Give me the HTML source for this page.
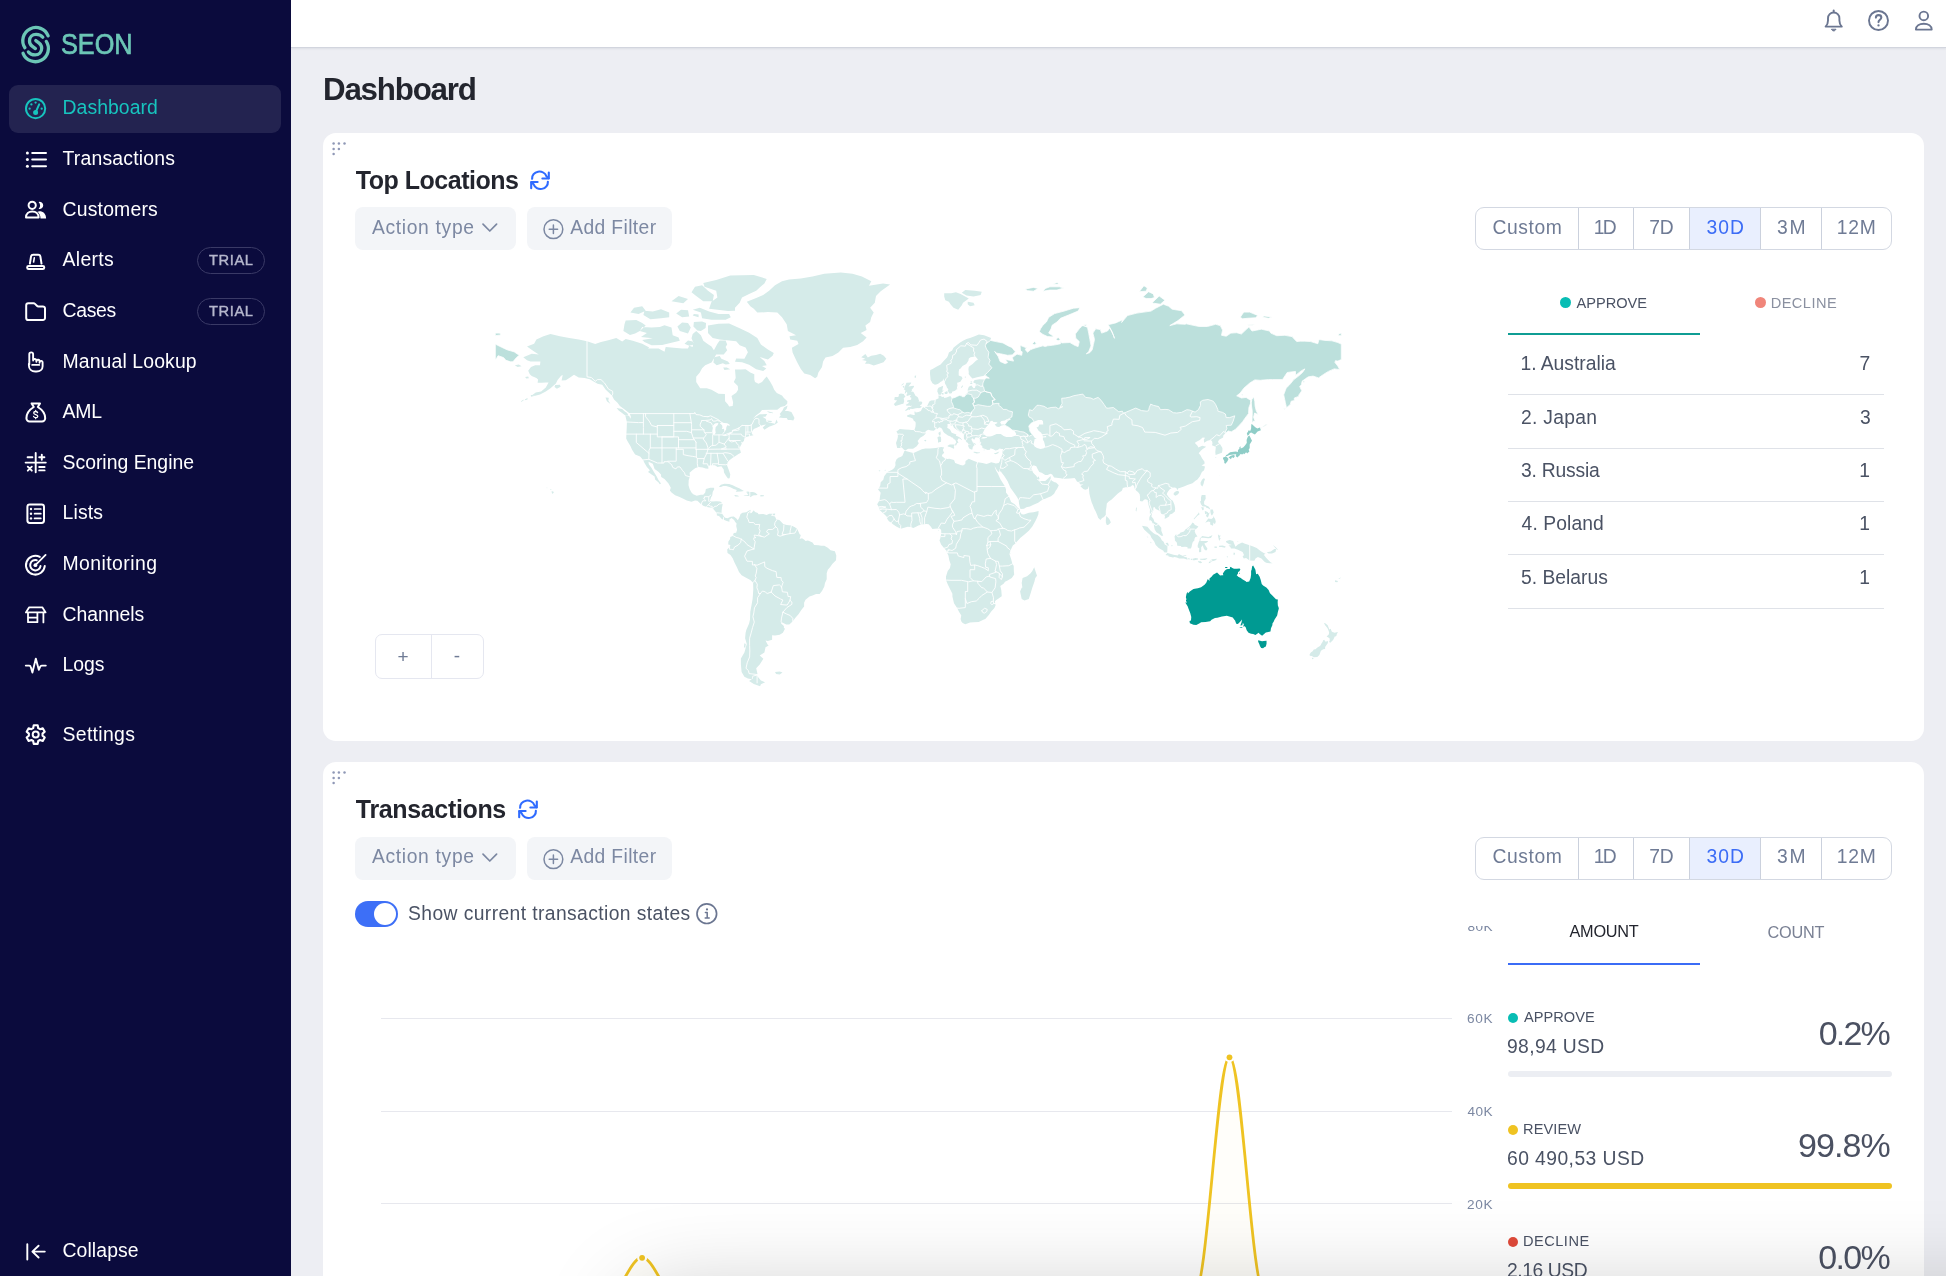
<!DOCTYPE html>
<html lang="en">
<head>
<meta charset="utf-8">
<title>SEON Dashboard</title>
<style>
*{box-sizing:border-box;margin:0;padding:0}
html,body{width:1946px;height:1276px;overflow:hidden;background:#edeef3}
body{font-family:"Liberation Sans",sans-serif;position:relative;color:#4a5264}
.abs{position:absolute}
.t{position:absolute;white-space:nowrap;line-height:1}
/* sidebar */
#side{position:absolute;left:0;top:0;width:291px;height:1276px;background:#0b0b3d}
#side .act{position:absolute;left:9px;top:85px;width:272px;height:48px;border-radius:9px;background:#232350}
.nav{position:absolute;left:62.5px;font-size:19.4px;letter-spacing:.35px;color:#fff;white-space:nowrap;line-height:24px}
.ico{position:absolute;left:24px;width:24px;height:24px;overflow:visible}
.trial{position:absolute;left:197px;width:68px;height:27px;border:1px solid #3a3a66;border-radius:14px;color:#b6b8cd;font-size:14.7px;-webkit-text-stroke:.4px #b6b8cd;letter-spacing:.6px;line-height:25px;padding-left:.6px;text-align:center}
/* header */
#hdr{position:absolute;left:291px;top:0;width:1655px;height:48px;background:#fff;border-bottom:1px solid #d2d5de;box-shadow:0 1px 2px rgba(20,30,60,.07)}
/* cards */
.card{position:absolute;left:323px;width:1601px;background:#fff;border-radius:13px}
.pill{position:absolute;height:43px;border-radius:8px;background:#f3f5f8}
.pill .t{color:#7c88a2;font-size:19.3px;letter-spacing:.4px}
.rng{position:absolute;left:1475px;width:417px;height:43px;border:1px solid #d3d8e2;border-radius:9px;overflow:hidden;background:#fff}
.rng i{position:absolute;top:0;width:1px;height:43px;background:#cbd1dd}
.rng .sel{position:absolute;top:0;left:214px;width:70px;height:41px;background:#e9effe}
.rng .t{color:#6f7b95;font-size:19.3px;letter-spacing:.3px;top:11px}
.row{position:absolute;left:1508px;width:376px;height:1px;background:#dfe2e8}
.li{color:#4a5264;font-size:19.3px;letter-spacing:.3px}
.num{position:absolute;width:60px;text-align:right;color:#4a5264;font-size:19.3px;line-height:1;left:1810px}
.lbl{color:#4a5264;font-size:14.6px;letter-spacing:.9px}
.pct{position:absolute;width:200px;left:1691px;text-align:right;font-size:32.5px;line-height:1;color:#4a5264;letter-spacing:.4px}
.bar{position:absolute;left:1508px;width:384px;height:6px;border-radius:3px;background:#eceef3}
.grid{position:absolute;left:381px;width:1071px;height:1px;background:#e7e8ee}
.ax{color:#7c88a2;font-size:13.6px;letter-spacing:.2px}
</style>
</head>
<body>
<div id="root" style="position:absolute;left:0;top:0;width:1946px;height:1276px;overflow:hidden;will-change:transform">
<!-- ================= HEADER ================= -->
<div id="hdr"></div>
<svg class="abs" style="left:1800px;top:0" width="146" height="48" viewBox="1800 0 146 48" fill="none" stroke="#6b7691" stroke-width="1.9" stroke-linecap="round" stroke-linejoin="round">
<path d="M1825.6,26.6c1.6,-1.6 2.4,-3.4 2.4,-6.2v-2.2a5.7,5.7 0 0 1 11.4,0v2.2c0,2.8 .8,4.6 2.4,6.2z"/><path d="M1833.7,10.4v1.6"/><path d="M1831.6,29.6c.5,.9 1.2,1.3 2.1,1.3s1.6,-.4 2.1,-1.3z" fill="#6b7691" stroke-width="1"/>
<circle cx="1878.5" cy="20.5" r="9.5"/><path d="M1875.9,17.6c0,-1.5 1.1,-2.5 2.7,-2.5s2.7,1 2.7,2.4c0,2.3 -2.8,2.2 -2.8,4.6" stroke-width="2.1"/><circle cx="1878.5" cy="25.4" r="1.15" fill="#6b7691" stroke="none"/>
<circle cx="1923.8" cy="15.9" r="4.3"/><path d="M1915.9,29.6c0,-3.6 3.4,-5.9 7.9,-5.9s7.9,2.3 7.9,5.9z"/>
</svg>

<!-- ================= SIDEBAR ================= -->
<div id="side">
  <div class="act"></div>
  <svg class="abs" style="left:0;top:0" width="291" height="80" viewBox="0 0 291 80" fill="none" stroke="#6cc6b6" stroke-width="3.3" stroke-linecap="round" stroke-linejoin="round">
<path d="M24.91,47.73A13.1,13.1 0 1 1 48.13,35.91"/><path d="M46.29,41.47A13.1,13.1 0 1 1 23.07,53.29"/><path d="M42.80,37.30C41.30,35.30 38.90,34.30 36.10,34.30C32.30,34.30 29.50,37.20 29.50,40.90C29.50,43.10 30.30,44.70 32.10,46.10L35.40,48.60"/><path d="M28.40,51.90C29.90,53.90 32.30,54.90 35.10,54.90C38.90,54.90 41.70,52.00 41.70,48.30C41.70,46.10 40.90,44.50 39.10,43.10L35.80,40.60"/>
</svg>
<div class="t" id="seon" style="left:60.7px;top:30.4px;font-size:28.8px;color:#6cc6b6;-webkit-text-stroke:.7px #6cc6b6;transform:scaleX(.877);transform-origin:0 0;letter-spacing:0">SEON</div>
  <div class="nav" style="top:95px;color:#17c4be;letter-spacing:0.05px">Dashboard</div>
  <div class="nav" style="top:146px;letter-spacing:0.195px">Transactions</div>
  <div class="nav" style="top:197px;letter-spacing:0.19px">Customers</div>
  <div class="nav" style="top:247px;letter-spacing:0.33px">Alerts</div>
  <div class="nav" style="top:298px;letter-spacing:-0.3px">Cases</div>
  <div class="nav" style="top:349px;letter-spacing:0.125px">Manual Lookup</div>
  <div class="nav" style="top:399px;letter-spacing:-0.2px">AML</div>
  <div class="nav" style="top:450px;letter-spacing:0px">Scoring Engine</div>
  <div class="nav" style="top:500px;letter-spacing:0.15px">Lists</div>
  <div class="nav" style="top:551px;letter-spacing:0.44px">Monitoring</div>
  <div class="nav" style="top:602px;letter-spacing:-0.04px">Channels</div>
  <div class="nav" style="top:652px;letter-spacing:-0.05px">Logs</div>
  <div class="nav" style="top:722px;letter-spacing:0.33px">Settings</div>
  <div class="nav" style="top:1237.6px;letter-spacing:0.09px">Collapse</div>
  <div class="trial" style="top:247px">TRIAL</div>
  <div class="trial" style="top:298px">TRIAL</div>
  <svg class="abs" style="left:0;top:0" width="291" height="1276" viewBox="0 0 291 1276" fill="none" stroke="#fff" stroke-width="2" stroke-linecap="round" stroke-linejoin="round">
<g stroke="#17c4be"><circle cx="35.6" cy="108.6" r="9.6"/><path d="M35.7,112.2L39.2,104.4" stroke-width="2"/><circle cx="35.6" cy="112.6" r="1.5" fill="#17c4be"/><g fill="#17c4be" stroke="none"><circle cx="29.6" cy="108.7" r="1.15"/><circle cx="31.4" cy="104.4" r="1.15"/><circle cx="35.6" cy="102.6" r="1.15"/><circle cx="41.7" cy="108.7" r="1.15"/></g></g>
<path d="M32.2,153H46M32.2,159.6H46M32.2,166.2H46"/><g fill="#fff" stroke="none"><circle cx="27.4" cy="153" r="1.5"/><circle cx="27.4" cy="159.6" r="1.5"/><circle cx="27.4" cy="166.2" r="1.5"/></g>
<circle cx="32.2" cy="205.3" r="3.6"/><path d="M26,217.4c0,-3.6 2.8,-6 6.3,-6s6.3,2.4 6.3,6z"/><path d="M38.6,201.9a3.6,3.6 0 1 1 0,6.9a5.2,5.2 0 0 0 0,-6.9zM39.5,211.3c3.6,0 6.6,2.6 6.6,7.1h-5.6c0,-3 -1.2,-5.3 -3,-6.6c.6,-.3 1.3,-.5 2,-.5z" fill="#fff" stroke="none"/>
<rect x="27.2" y="265.9" width="17" height="3.2" rx="1.4"/><path d="M29.9,263.6L31,256.6c.2,-1.2 1,-1.9 2.1,-1.9h5.2c1.1,0 1.9,.7 2.1,1.9L41.5,263.6"/><path d="M34.3,257.8L33.6,262" stroke-width="1.6"/>
<path d="M26.2,305.4a2.1,2.1 0 0 1 2.1,-2.1h5.2c.6,0 1.1,.2 1.5,.6l1.9,1.9c.4,.4 .9,.6 1.5,.6h4.5a2.1,2.1 0 0 1 2.1,2.1v9.4a2.1,2.1 0 0 1 -2.1,2.1h-14.6a2.1,2.1 0 0 1 -2.1,-2.1z"/>
<path d="M29.3,364.5V354.3a1.9,1.9 0 0 1 3.8,0v6.3M33.1,360.2a1.7,1.7 0 0 1 3.3,.4v1.2M36.4,361.2a1.6,1.6 0 0 1 3.2,.4v1.2M39.6,362.2a1.5,1.5 0 0 1 3,.4v3.6c0,3.4 -2.6,5.3 -6,5.3h-1.4c-3.6,0 -6.3,-2.5 -6.3,-6.1v-1.6M32.2,364.9H39.2" stroke-width="1.9"/>
<path d="M31.6,403.4h8.4l-2.2,3.6c4.3,2.6 7.4,6.9 7.4,11.2a3.2,3.2 0 0 1 -3.2,3.2h-12.4a3.2,3.2 0 0 1 -3.2,-3.2c0,-4.3 3.1,-8.6 7.4,-11.2z"/><path d="M37.6,412.6c-.4,-.8 -1.2,-1.1 -2,-1.1c-1.1,0 -1.9,.6 -1.9,1.5c0,2.1 4.1,1 4.1,3.2c0,.9 -.9,1.5 -2,1.5c-1,0 -1.9,-.4 -2.2,-1.3M35.7,410.5v1M35.7,417.7v1" stroke-width="1.3"/>
<path d="M35.7,453V472.3M25.6,462.6H45.8M27.6,457.2H32.4M39.2,457.2H44.4M41.8,454.6V459.8M27.8,466.7L31.8,470.7M31.8,466.7L27.8,470.7M39.2,467H44.6M39.2,470.4H44.6" stroke-width="1.9"/>
<rect x="27.4" y="504.4" width="16.6" height="18.6" rx="2.4"/><path d="M34.6,509H40.8M34.6,513.7H40.8M34.6,518.4H40.8" stroke-width="1.7"/><g fill="#fff" stroke="none"><circle cx="31" cy="509" r="1.2"/><circle cx="31" cy="513.7" r="1.2"/><circle cx="31" cy="518.4" r="1.2"/></g>
<path d="M39.81,556.90A9.4,9.4 0 1 0 44.76,566.02"/><path d="M36.75,560.18A5.2,5.2 0 1 0 40.52,566.10"/><circle cx="35.4" cy="565.2" r="1.9" fill="#fff" stroke="none"/><path d="M35.4,565.2L45.6,554.9" stroke-width="1.8"/>
<path d="M29.2,607.3H42.3L45.6,612.4H25.9Z" stroke-width="1.8"/><path d="M28,613V622.2H37.4V613M28,617.6H37.4M43.4,613V622.4" stroke-width="1.8"/>
<path d="M25.8,665.6H29.2c.9,0 1.4,.5 1.6,1.3L32.4,672.6L35.8,658.6L38.8,669.8L40.2,666.6c.3,-.7 .8,-1 1.5,-1H45.8" stroke-width="1.9"/>
<path d="M38.24,728.18L37.68,725.31L33.72,725.31L33.16,728.18L31.41,729.19L28.64,728.24L26.66,731.66L28.87,733.59L28.87,735.61L26.66,737.54L28.64,740.96L31.41,740.01L33.16,741.02L33.72,743.89L37.68,743.89L38.24,741.02L39.99,740.01L42.76,740.96L44.74,737.54L42.53,735.61L42.53,733.59L44.74,731.66L42.76,728.24L39.99,729.19Z" stroke-width="2.1"/><circle cx="35.7" cy="734.6" r="3"/>
<path d="M27.3,1244.3V1259.5M44.8,1251.6H32.6M38.6,1245.7L32.4,1251.6L38.6,1257.5" stroke-width="1.9"/>
</svg>
</div>

<!-- ================= TITLE ================= -->

<!-- ================= CARD 1 ================= -->
<div class="card" style="top:133px;height:608px"></div>
<svg class="abs" style="left:0;top:0;overflow:visible" width="1" height="1" fill="#8f98b6"><circle cx="333.6" cy="143.6" r="1.25"/><circle cx="338.9" cy="143.6" r="1.25"/><circle cx="344.5" cy="143.6" r="1.25"/><circle cx="333.6" cy="148.9" r="1.25"/><circle cx="338.9" cy="148.9" r="1.25"/><circle cx="333.6" cy="154.1" r="1.25"/></svg>
<svg class="abs" style="left:528.8px;top:170.2px" width="22" height="20.4" viewBox="-12 -12 24 24" preserveAspectRatio="none" fill="none" stroke="#2f6bff" stroke-width="2.3" stroke-linecap="round" stroke-linejoin="round">
<path d="M-8.6,-1.6A8,8 0 0 1 7,-4.6L9.4,-2.2"/><path d="M9.6,-9.2V-2H2.6"/>
<path d="M8.6,1.8A8,8 0 0 1 -7,4.8L-9.4,2.4"/><path d="M-9.6,9.4V2.2H-2.6"/>
</svg>
<div class="pill" style="left:355px;top:207px;width:161px"><svg class="abs" style="left:126px;top:15px" width="18" height="12" viewBox="0 0 18 12" fill="none" stroke="#7c88a2" stroke-width="1.7" stroke-linecap="round" stroke-linejoin="round"><path d="M2,2.2L8.8,9L15.6,2.2"/></svg></div>
<div class="pill" style="left:527px;top:207px;width:145px"><svg class="abs" style="left:15px;top:10.5px" width="23" height="23" viewBox="0 0 23 23" fill="none" stroke="#7c88a2" stroke-width="1.5" stroke-linecap="round"><circle cx="11.4" cy="11.2" r="9.4"/><path d="M7.2,11.2H15.6M11.4,7V15.4"/></svg></div>
<div class="rng" style="top:207px">
  <div class="sel"></div>
  <i style="left:102px"></i><i style="left:157px"></i><i style="left:213px"></i><i style="left:284px"></i><i style="left:345px"></i>
</div>
<svg class="abs" style="left:0;top:0" width="1946" height="760" viewBox="0 0 1946 760">
<path fill="#d5ebe9" d="M523.3,357.3L531.7,353.8L538.8,354.5L534.1,351.4L527.0,346.6L534.1,343.7L536.4,339.5L543.5,336.2L550.5,334.0L559.9,336.2L569.3,337.9L578.7,339.5L587.0,341.2L595.2,344.1L601.0,342.1L609.3,340.0L616.3,337.9L622.2,341.6L625.7,339.1L632.8,340.8L642.2,343.7L649.2,347.4L648.0,348.6L658.6,348.6L664.5,351.8L665.7,347.0L673.9,347.8L682.1,348.6L688.0,348.6L689.2,345.8L692.7,347.0L693.4,342.5L691.5,338.3L692.7,334.0L696.2,331.0L700.9,335.3L703.3,340.8L707.3,343.7L711.5,346.6L713.9,350.2L717.4,343.7L719.7,340.4L725.6,340.4L727.2,344.5L725.6,347.0L727.2,350.2L723.7,354.5L716.2,354.5L713.9,358.4L711.5,362.6L705.2,365.2L702.1,368.2L699.8,372.5L696.2,376.8L696.2,382.0L700.2,388.2L706.8,388.2L711.5,389.8L718.5,393.8L724.9,394.1L725.1,401.2L728.0,404.4L729.1,406.6L732.7,406.0L733.1,402.2L731.5,396.1L736.2,392.8L738.1,389.8L737.8,386.1L733.8,382.0L735.7,377.9L735.0,369.6L740.9,369.6L745.6,369.3L750.3,372.5L754.3,374.3L754.3,379.6L755.0,382.0L758.5,383.7L762.0,382.0L764.8,378.6L766.7,376.4L770.2,381.7L772.6,386.1L774.2,389.8L776.8,393.1L782.0,395.4L783.9,398.0L787.4,401.2L787.2,403.8L784.8,406.0L780.8,406.9L777.3,409.7L770.2,409.7L762.0,410.0L759.7,412.7L756.2,415.2L752.6,419.1L755.0,417.3L759.7,414.3L767.2,414.0L765.5,416.7L762.5,416.7L766.0,419.1L766.5,421.7L769.1,422.6L772.6,423.2L775.0,423.8L776.4,419.6L777.8,422.6L775.0,424.6L769.1,426.7L764.4,429.8L762.7,427.5L766.0,424.6L763.2,424.9L760.9,425.8L757.3,427.5L753.8,429.0L752.2,431.3L751.7,433.3L752.6,434.7L753.8,434.9L752.4,435.5L750.5,435.8L747.9,436.4L744.9,437.5L744.4,438.6L743.9,441.1L742.3,442.5L740.9,441.4L741.8,443.8L740.4,446.3L739.7,447.9L738.8,443.5L738.3,447.4L739.7,448.4L740.2,450.1L740.9,452.7L738.5,454.1L735.5,455.9L732.7,457.8L729.1,460.4L727.5,462.5L727.0,465.3L728.9,470.2L730.3,474.5L729.6,478.3L728.0,478.5L726.1,476.0L724.0,472.5L723.7,469.4L721.4,466.3L719.7,466.6L717.6,467.1L715.0,465.3L711.5,465.3L708.2,465.8L708.4,468.7L705.6,468.4L702.6,467.4L698.6,466.9L695.5,467.9L692.7,469.9L689.6,472.7L689.9,476.5L688.7,480.3L688.5,485.2L689.6,488.9L691.5,492.6L693.2,494.3L696.7,495.8L700.9,494.8L703.3,494.8L705.2,492.6L705.9,488.9L710.3,487.7L713.9,487.7L714.3,488.9L712.7,491.9L712.2,495.5L711.0,497.5L709.9,501.1L712.7,501.6L716.2,501.3L720.2,501.6L722.8,503.5L722.1,507.1L721.6,510.7L721.6,513.0L723.7,515.9L725.1,517.8L727.5,518.3L730.8,516.8L733.8,516.6L736.4,518.5L735.2,522.1L734.1,519.9L731.5,518.0L729.4,519.5L729.4,521.8L726.8,521.1L723.7,519.7L721.8,519.0L719.0,515.9L716.9,515.4L716.7,513.0L713.1,508.8L712.2,507.8L708.0,507.3L703.7,506.1L701.4,504.4L697.4,500.8L695.0,500.6L691.5,501.8L686.8,500.4L683.3,498.7L679.1,496.7L675.1,495.3L671.5,492.6L669.9,490.4L670.8,487.7L668.5,483.5L664.5,479.0L661.2,477.0L661.0,474.5L658.4,471.7L654.6,468.9L652.8,463.8L648.5,461.7L648.8,464.3L651.6,468.1L653.9,472.0L656.7,476.5L658.6,480.3L661.0,483.5L659.8,484.2L658.6,482.5L655.1,479.5L654.6,476.5L651.6,474.5L649.2,472.7L648.0,472.0L649.9,470.2L646.9,466.9L644.5,463.0L643.1,459.9L640.1,456.4L635.1,454.6L632.1,449.8L630.4,446.0L627.4,441.1L626.2,438.6L626.4,434.1L626.7,428.4L626.9,422.0L625.3,415.5L629.2,416.1L630.4,418.8L630.9,416.7L629.7,413.6L628.8,412.7L625.0,409.7L619.9,406.0L617.5,402.8L614.0,399.6L612.1,395.8L609.3,393.1L605.8,389.8L602.2,384.8L597.5,383.7L594.5,382.0L589.8,379.3L584.6,377.9L578.7,377.5L574.0,374.7L569.3,377.9L565.8,380.3L561.6,380.6L562.7,375.0L565.8,373.6L561.1,375.7L557.6,379.9L555.9,383.4L550.5,388.2L545.8,391.5L540.0,394.5L535.2,395.8L531.0,396.1L535.7,392.5L541.1,391.5L545.8,387.5L548.6,382.4L545.8,382.4L541.6,382.7L537.6,382.7L538.1,379.6L536.4,377.9L531.7,376.1L529.8,374.3L528.2,370.7L531.0,367.1L535.2,365.2L540.0,365.2L540.4,361.5L536.4,361.5L530.5,361.5L527.0,360.3Z M773.8,353.0L767.9,349.4L760.9,344.5L757.3,337.9L749.1,332.7L739.7,328.3L729.1,323.4L718.5,323.8L708.0,325.6L708.0,333.1L712.7,337.9L719.7,339.5L729.1,340.4L736.2,341.2L739.7,345.3L745.6,347.4L747.9,352.2L744.4,358.8L736.2,358.4L735.0,361.8L742.0,362.2L749.1,364.8L756.2,369.3L763.2,371.1L766.3,368.5L762.0,366.0L766.7,365.2L764.4,361.1L759.7,356.9L767.9,359.6L772.6,355.7Z M644.5,342.1L651.6,345.3L662.1,344.9L670.4,342.9L679.8,340.8L678.6,337.4L672.7,335.3L671.5,327.4L664.5,325.2L659.8,327.0L651.6,327.4L642.2,327.0L639.8,331.0L646.9,333.1L641.0,337.0L652.8,338.3L642.2,340.0Z M630.0,334.9L623.4,331.0L624.5,324.3L625.7,320.6L636.3,320.1L642.2,322.9L645.7,325.6L639.8,331.0L635.1,333.6Z M643.4,315.0L650.4,319.2L661.0,318.3L669.2,317.3L669.2,312.6L661.0,309.2L652.8,311.6L644.5,310.7Z M730.8,317.3L725.6,319.7L711.5,319.7L702.1,318.3L700.9,312.6L692.7,309.7L699.8,307.7L709.1,311.6L718.5,314.0L729.1,314.0Z M735.0,310.7L728.0,311.1L709.1,308.7L711.5,301.7L717.4,297.6L716.2,290.7L704.5,286.8L703.3,282.9L716.2,280.1L730.3,275.5L753.8,274.9L766.7,278.9L764.4,283.5L759.7,287.4L756.2,290.7L749.1,293.9L742.0,297.6L739.7,302.7L735.0,307.7Z M712.7,301.2L703.3,301.2L696.2,296.0L691.5,292.3L695.0,286.8L702.1,285.2L708.0,290.7L713.9,294.9Z M697.4,330.5L693.4,326.5L693.9,322.0L702.1,321.5L706.1,322.9L705.6,327.9L700.9,331.0Z M688.0,333.6L679.8,331.0L677.4,326.5L682.1,322.5L688.0,322.9L690.8,327.4Z M684.5,343.7L688.0,340.4L692.7,341.6L693.9,344.5L689.2,345.8Z M714.3,357.3L713.4,362.6L716.7,365.2L722.8,363.3L725.6,364.5L729.8,364.1L728.0,361.5L721.4,358.8L719.7,356.1Z M689.2,316.4L682.1,317.3L676.2,313.6L681.0,309.7L688.0,310.2Z M630.4,312.6L638.6,314.0L645.7,310.7L642.2,306.2L634.0,307.7Z M671.5,301.2L683.3,303.2L688.0,299.1L678.6,296.0Z M692.7,315.5L698.6,317.3L698.6,314.5L693.9,314.0Z M723.2,367.4L726.8,367.4L730.3,369.3L724.4,370.0Z M778.9,417.6L780.8,415.2L779.7,414.0L782.5,410.6L783.9,407.5L787.6,405.6L786.7,408.8L784.8,410.9L787.9,410.9L791.4,412.1L793.0,414.9L794.5,417.9L793.3,420.5L790.9,419.9L787.9,419.9L786.7,417.9L783.2,417.9Z M766.7,410.9L772.6,412.4L773.3,413.3L769.1,412.7Z M767.2,420.5L772.1,421.1L771.2,422.3L767.9,421.7Z M616.6,408.1L622.2,409.1L624.5,411.2L627.1,413.0L628.5,415.5L625.0,415.2L622.7,413.6L618.7,410.6Z M605.5,397.4L608.8,397.7L608.3,400.6L610.5,404.1L606.9,401.2Z M555.2,385.1L559.9,384.8L560.6,386.8L556.9,388.8L554.5,387.1Z M530.8,395.1L534.3,395.1L534.1,396.1L531.0,396.7Z M525.1,399.3L527.5,398.0L527.5,399.6L524.7,400.3Z M521.1,401.2L523.5,399.6L523.5,400.6L521.1,401.9Z M514.8,365.2L518.8,364.5L521.6,366.3L517.6,367.1Z M525.1,377.1L528.2,376.4L528.9,378.2L526.3,378.6Z M815.1,378.2L810.2,375.0L804.3,373.6L800.8,368.9L797.3,362.6L794.9,357.6L792.6,352.6L791.9,347.8L798.5,344.1L797.3,340.8L790.2,339.5L789.5,336.2L796.1,335.3L787.9,331.0L786.7,324.3L782.0,317.3L777.3,312.6L767.9,312.1L757.3,312.6L753.8,308.7L750.3,306.2L746.8,301.7L756.2,298.1L763.2,294.9L769.1,290.7L775.0,285.2L782.0,281.2L789.0,279.5L800.8,278.4L812.5,276.6L824.3,273.7L840.8,272.5L852.5,273.7L861.9,276.6L871.3,281.2L869.0,285.7L883.0,283.5L890.1,284.6L880.7,291.2L876.0,296.0L874.8,302.7L870.1,307.7L873.7,312.6L871.3,317.3L870.1,322.0L865.4,325.6L866.6,330.1L860.7,333.1L866.6,337.4L863.1,341.2L857.2,344.9L850.2,347.0L843.1,347.8L838.4,352.6L832.5,356.1L825.5,357.6L823.1,361.5L822.0,367.1L818.4,372.5L817.2,376.8Z M861.2,357.3L865.4,354.1L867.8,357.6L871.3,355.7L876.0,354.9L880.2,353.8L883.8,355.7L886.3,358.8L883.5,362.2L878.4,364.1L873.7,365.6L869.0,363.7L865.0,363.7L866.6,361.1L861.9,359.9L865.4,358.8Z M736.4,518.5L737.8,520.2L739.2,517.8L740.6,514.0L742.5,512.8L746.3,512.3L748.6,510.7L750.7,509.7L750.7,511.9L749.6,513.3L751.5,513.0L753.8,510.2L755.0,511.9L757.8,513.0L758.5,514.2L763.2,514.0L766.7,514.9L769.1,513.8L772.6,513.8L771.0,515.4L775.0,516.6L776.1,519.0L779.7,520.2L783.2,523.9L786.7,525.1L791.4,525.4L794.9,527.2L797.3,528.9L799.6,534.3L800.8,535.0L799.6,539.0L802.0,538.3L804.3,539.7L805.5,540.9L807.9,540.6L812.5,542.5L814.2,545.1L818.4,545.3L821.2,545.8L824.3,545.8L827.8,547.7L830.6,550.3L834.9,551.2L836.3,555.5L836.0,560.2L832.5,563.8L830.2,566.9L827.8,569.7L826.7,573.3L826.7,579.3L825.0,583.0L824.3,586.6L822.0,591.0L819.6,594.0L816.1,594.0L812.5,595.5L809.5,596.5L805.5,599.7L804.1,602.7L804.1,606.5L801.3,610.1L798.5,614.2L795.6,617.4L792.6,621.6L789.3,624.5L786.2,624.5L781.3,622.1L781.1,623.4L783.9,626.1L783.9,628.2L785.1,628.5L782.9,632.8L779.7,634.7L775.0,635.5L772.1,635.3L772.1,639.7L767.9,641.1L765.5,640.5L767.9,645.0L768.8,645.6L765.5,647.3L764.4,652.5L759.7,655.4L763.4,658.7L759.7,664.4L756.2,668.3L757.6,674.6L752.6,675.8L751.7,679.3L747.9,678.4L744.4,676.8L741.6,672.0L740.9,664.4L740.9,658.4L744.4,652.5L746.8,643.9L745.1,638.3L745.6,632.8L746.3,630.1L749.1,623.4L750.0,619.4L750.3,611.7L751.5,605.3L752.6,599.0L752.9,595.2L753.3,589.1L753.1,582.7L750.3,580.1L745.6,577.6L741.6,575.2L739.0,571.9L736.9,567.3L734.5,562.6L732.7,558.3L730.5,555.0L727.5,553.1L727.2,549.6L729.6,547.0L730.5,544.9L728.2,544.4L728.4,541.4L730.1,539.0L730.3,537.1L732.7,535.9L733.1,534.8L733.8,533.1L736.2,532.7L737.1,529.8L736.2,526.1L736.6,523.5L735.2,522.1Z M757.1,675.5L753.1,676.5L752.6,678.7L749.1,680.9L753.8,683.9L760.1,686.2L760.9,684.2L765.1,682.2L760.9,680.6L757.8,676.8Z M743.9,647.6L744.4,643.3L745.8,643.9L745.3,647.6Z M775.0,672.0L779.7,671.4L782.5,672.4L779.7,674.6L776.1,673.9Z M718.8,486.7L720.9,484.7L724.4,483.7L729.1,484.0L732.7,485.2L736.2,487.0L739.7,488.4L743.9,490.9L740.9,491.6L735.7,491.7L736.9,489.9L733.8,488.9L730.3,487.2L726.1,486.0L723.2,486.0L720.9,487.0Z M743.3,495.4L747.2,495.3L748.3,494.8L747.2,493.8L747.5,492.7L745.8,491.9L747.9,491.5L749.8,492.0L752.4,491.9L754.0,492.2L755.7,493.1L757.6,494.8L756.2,495.3L754.0,495.2L752.4,495.8L750.5,497.2L749.6,496.0L747.2,495.9L744.9,496.0Z M734.2,495.5L735.2,495.0L737.8,495.4L739.2,496.2L737.8,496.6L735.5,496.5Z M760.4,495.0L764.1,495.3L763.7,496.2L760.4,496.4Z M772.8,513.8L775.2,513.5L775.0,515.2L772.8,515.2Z M551.7,490.9L554.0,491.9L552.6,494.1L551.7,492.4Z M550.1,488.9L551.7,489.2L550.8,489.9Z M546.5,487.5L547.7,487.9L546.8,488.2Z M904.4,451.1L905.8,450.9L911.2,452.5L913.6,453.0L916.9,451.4L921.8,449.3L925.4,448.4L930.0,448.4L935.9,447.9L941.3,447.1L944.2,447.6L943.0,449.5L943.2,451.1L944.2,452.7L942.0,455.1L942.0,456.2L944.4,458.0L947.2,459.1L949.3,458.8L954.0,460.1L955.2,463.0L960.6,465.1L963.0,465.6L965.3,464.0L965.5,460.9L968.8,458.8L972.8,460.4L974.7,461.2L977.5,462.2L982.5,463.0L986.5,464.0L988.8,463.2L991.2,462.2L994.2,463.0L995.9,463.5L998.7,463.0L1000.3,467.6L999.4,470.2L998.9,472.2L997.0,470.2L995.4,467.6L994.7,466.3L994.9,467.6L996.3,470.9L997.7,473.2L1000.3,479.0L1002.0,481.8L1005.0,486.5L1006.0,489.4L1006.0,492.6L1008.8,496.2L1011.1,502.0L1014.7,504.2L1017.7,507.8L1020.1,509.5L1019.8,511.6L1021.7,514.2L1024.0,514.5L1028.8,512.8L1033.5,512.3L1038.6,510.9L1038.4,514.2L1037.0,517.8L1035.3,521.3L1032.3,526.5L1028.8,530.8L1024.8,534.3L1020.5,537.8L1017.0,541.4L1015.1,543.7L1012.8,545.6L1011.4,548.6L1010.0,551.9L1009.5,554.3L1011.1,559.0L1012.3,563.3L1013.7,566.1L1013.9,572.1L1014.2,574.5L1011.8,578.1L1007.6,580.5L1005.0,581.8L1003.6,583.7L1000.3,586.1L1001.3,590.3L1001.7,595.2L1001.7,596.2L998.2,598.7L995.9,600.2L994.9,601.5L995.6,605.3L994.4,608.1L991.2,611.4L988.8,615.0L985.3,618.9L983.9,619.4L978.7,622.1L973.5,622.3L970.0,622.6L965.3,624.2L962.7,623.1L961.5,621.8L960.6,618.9L961.3,615.5L959.0,611.7L957.1,608.1L954.0,603.3L952.4,596.5L952.4,593.8L950.0,589.1L947.7,584.2L946.0,580.1L946.0,576.4L947.7,570.9L950.0,568.0L950.7,564.2L949.3,560.2L948.4,555.5L947.2,553.1L946.0,550.3L944.2,548.2L941.1,544.4L939.5,540.6L940.4,538.1L940.9,535.5L941.3,532.4L941.1,529.8L939.2,528.2L937.8,528.4L934.8,528.7L932.4,528.9L930.5,526.3L928.6,524.2L926.3,523.9L921.8,524.4L918.3,525.6L916.0,526.8L913.4,527.9L910.8,527.0L907.7,526.8L904.2,527.7L900.7,528.7L896.7,526.8L892.9,524.2L891.3,522.8L888.9,521.3L887.3,519.0L886.6,516.6L884.0,514.0L882.8,513.0L880.7,510.9L879.1,509.7L878.8,507.3L877.2,504.2L878.8,501.6L879.5,500.8L880.0,496.2L880.7,492.8L878.1,489.4L880.2,485.7L880.7,482.3L883.3,479.8L884.2,476.3L887.3,472.2L888.0,471.7L892.2,469.7L894.3,467.9L895.5,465.3L895.3,462.5L896.4,459.6L898.3,457.8L900.4,457.0L902.3,455.9L903.5,453.3Z M1034.2,567.3L1037.0,575.7L1035.3,578.1L1034.4,581.8L1032.3,587.8L1030.4,594.0L1028.8,599.0L1024.5,600.5L1021.7,599.0L1020.8,594.7L1020.1,591.5L1021.7,587.8L1022.4,587.4L1021.7,583.0L1022.6,578.1L1027.1,576.2L1030.6,573.3L1032.3,570.9Z M978.9,334.4L984.1,335.3L991.2,337.9L990.0,340.4L990.7,340.4L995.9,341.6L1002.9,342.9L1008.8,346.2L1011.8,347.4L1015.4,351.8L1012.3,354.9L1007.6,355.3L1000.5,353.8L995.9,353.0L994.7,351.4L998.2,356.5L1000.1,361.5L1005.2,363.7L1007.6,362.6L1005.2,359.2L1007.6,359.9L1013.5,361.1L1012.3,357.6L1017.0,354.1L1021.7,355.3L1022.2,351.8L1020.5,351.0L1020.1,345.3L1026.4,347.8L1025.2,349.8L1027.6,352.2L1030.4,349.8L1032.3,349.0L1035.8,347.8L1042.9,345.8L1045.2,346.6L1047.5,345.8L1052.2,345.3L1057.0,344.5L1060.5,343.7L1060.5,340.4L1061.7,342.9L1069.9,342.5L1074.6,345.3L1078.1,346.6L1079.3,341.6L1075.8,338.3L1075.3,334.0L1079.3,328.8L1081.6,326.5L1082.8,325.2L1087.5,327.4L1088.7,333.1L1089.9,339.5L1091.0,345.8L1088.7,351.8L1086.3,353.8L1089.9,352.6L1092.2,349.8L1093.4,344.5L1094.5,339.5L1092.9,333.1L1095.7,328.8L1100.4,329.6L1101.6,333.1L1107.5,331.0L1109.8,327.9L1113.4,335.3L1114.5,338.3L1112.2,331.8L1108.2,324.7L1115.7,322.9L1122.8,319.7L1121.6,322.5L1127.5,315.5L1136.9,313.1L1143.9,312.1L1151.0,311.1L1155.7,308.2L1163.4,304.2L1168.6,306.2L1172.1,309.2L1181.5,310.7L1185.0,315.0L1178.0,320.6L1169.8,325.6L1176.8,323.8L1185.0,324.3L1186.2,323.8L1199.1,326.5L1207.4,326.5L1215.6,324.3L1220.3,325.6L1222.6,330.1L1221.5,335.3L1226.2,336.2L1230.9,333.1L1236.7,332.7L1241.4,334.0L1246.1,329.6L1248.9,327.0L1252.0,331.0L1261.4,329.2L1269.6,331.0L1270.8,333.1L1276.7,335.7L1284.9,335.3L1292.0,336.6L1296.7,341.6L1300.2,341.2L1304.9,341.2L1310.8,341.6L1317.8,343.7L1319.0,339.5L1324.9,340.4L1331.9,340.8L1337.8,342.5L1341.3,344.1L1341.3,359.6L1337.8,361.1L1335.4,360.7L1335.0,362.6L1337.8,366.0L1339.7,369.6L1334.2,368.9L1328.4,371.4L1323.7,374.3L1318.5,377.9L1313.1,376.1L1308.4,376.8L1305.6,378.6L1302.1,381.3L1301.4,384.8L1299.7,386.5L1301.8,390.8L1299.0,394.8L1298.5,396.4L1294.3,398.0L1294.3,400.6L1291.2,401.2L1290.3,404.4L1286.5,407.8L1285.4,402.8L1283.7,394.8L1286.1,388.2L1289.6,384.8L1293.8,379.6L1298.5,376.1L1302.5,372.5L1304.9,368.9L1301.4,370.7L1295.5,375.4L1295.5,371.4L1287.2,372.5L1282.5,379.6L1272.7,379.6L1268.5,379.6L1260.2,380.3L1254.8,379.9L1249.7,383.1L1243.8,388.2L1240.2,393.1L1236.7,395.8L1241.4,398.0L1246.1,397.4L1250.6,400.3L1250.4,403.8L1248.9,407.5L1248.5,413.6L1245.0,418.2L1242.6,421.7L1239.1,425.5L1235.5,429.3L1231.3,431.8L1228.3,431.0L1225.4,433.3L1223.3,435.5L1223.1,437.5L1219.1,439.7L1217.9,441.9L1220.3,444.4L1222.4,447.9L1222.4,450.6L1221.9,452.7L1219.1,453.8L1215.6,454.9L1215.3,451.9L1215.6,449.3L1215.8,446.8L1213.2,445.7L1212.0,445.2L1212.5,443.3L1212.0,441.1L1210.4,440.0L1207.4,440.8L1204.1,442.7L1203.8,439.7L1205.0,437.7L1202.7,437.5L1199.8,440.0L1195.6,442.2L1194.9,443.0L1197.5,445.7L1198.4,447.4L1202.2,445.7L1206.2,446.8L1202.7,449.0L1201.0,450.6L1198.7,453.3L1200.3,455.1L1202.2,458.6L1204.5,461.7L1204.5,463.8L1201.5,465.6L1205.0,466.6L1204.1,470.2L1201.9,472.0L1199.8,476.5L1197.2,479.8L1195.8,480.5L1192.5,483.3L1187.4,485.0L1183.9,486.5L1180.3,487.7L1178.0,488.4L1177.5,490.6L1176.3,487.9L1174.5,487.5L1172.1,487.7L1169.3,489.7L1167.4,492.6L1166.7,494.3L1168.6,497.0L1170.9,499.6L1172.8,500.8L1174.5,504.7L1175.2,508.3L1174.9,511.4L1172.1,513.8L1169.8,514.5L1169.0,516.6L1166.2,518.3L1164.6,518.7L1165.0,515.9L1163.9,514.5L1161.5,514.0L1160.1,511.4L1158.5,510.2L1155.7,509.0L1154.5,507.1L1153.3,507.6L1153.3,510.7L1152.1,513.0L1151.4,516.6L1152.1,517.3L1153.5,519.0L1154.5,522.1L1156.8,523.0L1158.5,524.4L1161.3,527.7L1161.3,530.8L1162.2,533.1L1163.2,535.7L1161.3,535.7L1159.2,534.1L1156.4,532.2L1154.7,529.6L1154.0,526.3L1153.8,523.9L1152.6,523.2L1151.7,521.3L1150.7,520.2L1149.3,520.4L1149.3,517.8L1150.0,515.4L1149.8,511.9L1150.0,509.5L1148.8,505.9L1147.9,502.3L1147.7,499.9L1145.8,499.2L1144.4,499.4L1142.3,501.6L1139.9,501.1L1140.1,497.5L1139.7,494.3L1138.0,491.9L1136.6,491.1L1135.2,489.4L1134.5,487.9L1134.0,485.7L1132.2,485.0L1131.0,486.5L1127.5,487.2L1125.6,487.2L1122.8,487.9L1122.3,489.7L1121.6,490.9L1119.9,491.9L1117.6,493.8L1114.5,496.7L1111.7,499.6L1108.7,501.6L1106.8,503.5L1106.5,506.8L1105.8,511.1L1105.8,514.7L1104.0,517.1L1102.1,518.0L1100.4,519.9L1098.1,517.8L1097.4,515.4L1095.7,511.4L1094.1,508.5L1092.7,504.7L1091.7,502.5L1090.6,498.7L1089.4,493.8L1089.1,490.2L1088.9,488.2L1088.7,486.0L1087.7,488.9L1085.2,489.7L1083.3,488.9L1080.9,486.7L1080.5,486.0L1083.5,484.2L1080.5,484.5L1079.7,483.5L1078.6,482.3L1076.9,481.5L1075.8,479.5L1074.6,478.0L1069.9,478.5L1064.7,478.8L1062.8,478.8L1060.7,478.3L1056.5,477.8L1054.1,477.5L1052.2,474.5L1050.6,473.7L1047.5,475.0L1045.2,475.0L1041.7,472.7L1039.3,472.0L1037.7,469.2L1036.3,466.3L1033.5,465.3L1032.5,466.6L1031.1,467.9L1032.3,470.4L1033.0,472.5L1034.9,474.5L1036.3,475.8L1037.4,477.8L1038.6,476.3L1039.6,479.0L1038.2,480.0L1039.6,481.0L1041.7,481.0L1045.2,481.0L1046.1,480.3L1048.3,478.3L1050.6,476.0L1050.8,479.0L1051.8,480.8L1054.6,482.3L1056.0,482.5L1058.8,485.2L1057.0,488.9L1055.8,490.4L1054.1,493.8L1051.1,496.2L1048.0,497.5L1045.2,498.7L1042.9,499.4L1040.5,501.1L1038.2,502.8L1033.5,504.7L1029.9,506.6L1026.4,507.3L1024.0,508.8L1020.5,509.0L1019.8,507.1L1019.1,504.0L1018.6,500.1L1017.0,497.0L1015.1,494.3L1013.5,491.9L1010.4,487.7L1008.8,484.0L1007.6,481.3L1005.7,478.3L1004.1,475.8L1001.7,472.7L1001.0,471.5L999.8,471.5L1000.3,467.6L998.7,463.0L999.8,461.2L1000.5,458.6L1001.7,456.2L1002.7,453.3L1002.4,451.9L1002.9,449.8L1003.4,449.0L1001.7,449.0L999.6,448.4L997.7,450.1L995.4,450.6L993.5,449.3L990.4,448.2L990.0,449.8L987.6,450.1L984.6,448.7L982.5,447.9L982.2,446.0L980.3,444.4L981.3,442.5L979.9,441.1L979.9,439.7L979.4,437.7L975.6,437.2L974.2,439.7L972.1,438.0L971.4,439.7L972.4,441.6L973.1,443.3L974.7,445.2L974.0,445.5L972.8,447.1L972.4,449.5L971.2,449.5L969.3,448.4L968.1,446.0L968.4,444.6L971.9,445.2L968.4,444.1L967.7,442.7L966.9,442.5L965.3,440.5L963.9,438.6L963.9,435.8L963.9,434.4L962.7,433.3L960.8,432.4L956.8,429.8L954.0,427.8L952.4,424.6L951.0,426.1L950.3,424.1L948.9,423.8L947.2,424.4L947.7,425.8L947.2,427.8L950.0,429.6L951.7,432.7L956.4,434.4L955.9,435.8L958.0,436.6L960.6,438.0L961.8,439.4L961.5,440.2L960.4,439.1L958.7,438.3L957.3,440.5L958.5,442.5L957.1,443.3L956.1,445.5L955.0,445.2L955.4,443.5L956.4,442.5L955.2,439.7L953.5,439.1L953.1,437.7L951.7,437.5L950.5,436.4L947.9,435.5L947.0,434.7L944.4,433.0L943.0,431.3L942.5,429.8L941.3,428.1L939.2,427.3L937.6,428.7L935.9,429.0L933.8,430.7L931.0,430.4L928.2,429.8L925.6,431.3L925.4,432.7L926.1,433.3L923.5,435.8L920.2,437.7L917.6,441.1L918.8,443.3L916.7,446.3L913.1,448.7L908.0,448.7L905.8,450.3L905.1,450.6L903.5,449.3L901.9,447.4L899.7,447.9L897.2,447.9L896.0,443.0L897.4,439.1L897.9,436.4L897.6,433.5L896.4,431.6L898.6,430.1L899.7,429.0L904.9,429.6L909.4,429.8L911.2,430.1L914.1,430.1L914.5,429.8L915.5,426.4L915.7,423.8L915.5,422.0L913.4,420.2L913.1,418.8L910.3,417.6L907.3,416.7L907.0,415.5L910.1,414.3L913.6,414.9L914.8,414.9L914.5,413.0L914.5,411.5L915.2,411.5L915.7,412.4L918.5,412.1L920.9,410.9L922.1,408.4L922.8,407.5L925.1,406.9L926.8,406.3L927.9,404.4L929.3,401.5L931.0,400.6L934.8,400.3L937.1,399.0L938.7,398.3L938.5,397.1L938.5,394.8L938.0,393.1L937.3,391.5L937.6,389.2L938.5,387.8L943.2,385.8L943.0,386.8L942.5,389.2L942.3,390.8L943.9,390.2L941.3,393.1L940.4,395.4L942.0,397.1L944.2,396.7L943.9,398.0L946.7,397.4L950.3,396.1L951.9,398.3L955.0,397.4L957.1,396.4L959.4,395.4L962.5,396.1L962.2,396.7L964.4,396.7L965.3,395.8L965.1,394.9L967.9,392.5L967.7,389.8L968.8,386.8L971.4,385.6L973.5,388.2L974.9,388.0L975.6,385.5L975.9,383.4L973.5,382.7L973.5,381.5L974.7,380.1L976.6,379.8L979.4,379.3L984.1,379.6L985.3,378.9L986.5,378.0L989.3,378.2L987.6,377.1L985.7,375.4L983.6,376.1L981.5,376.3L977.0,377.3L972.4,378.6L970.5,376.4L968.6,374.0L968.8,372.2L968.4,369.3L968.8,366.7L972.6,363.9L975.9,360.7L978.0,359.6L975.9,356.9L974.9,356.5L970.5,357.3L968.8,358.4L968.4,360.7L966.2,364.1L962.5,366.0L960.6,368.5L959.2,369.3L958.7,371.8L958.7,375.4L961.8,376.8L962.5,378.6L961.3,380.3L960.4,381.7L958.2,382.4L957.1,382.7L957.5,385.5L957.1,387.1L956.8,389.2L955.0,390.8L952.8,391.5L951.9,391.8L952.1,393.0L950.7,393.5L949.3,393.5L948.9,392.8L948.1,391.3L947.7,390.5L948.4,389.3L947.0,387.8L946.3,385.8L945.1,383.7L944.6,381.5L943.9,380.6L943.4,378.2L943.0,380.3L941.8,381.3L940.4,381.9L939.0,383.2L937.1,384.3L934.9,384.8L932.4,383.2L931.5,381.5L930.6,379.9L930.3,376.4L930.0,374.0L930.0,372.2L930.3,370.0L932.6,368.9L936.4,366.7L940.6,364.5L943.2,361.5L944.6,359.9L947.0,357.6L947.9,355.7L948.9,352.6L952.1,350.6L953.5,347.8L955.9,345.8L959.4,342.9L963.0,340.8L966.5,339.1L970.0,337.9L974.0,336.6Z M1324.1,623.1L1324.9,623.1L1327.7,625.3L1328.4,626.9L1329.3,629.6L1330.7,628.7L1331.7,631.5L1332.4,631.9L1334.7,632.8L1337.9,632.0L1336.6,634.7L1336.4,636.1L1334.0,636.9L1334.5,637.3L1333.1,640.0L1330.3,642.8L1329.1,641.9L1329.8,640.3L1329.5,638.2L1327.9,637.2L1326.6,636.4L1327.4,635.7L1328.6,634.7L1329.1,633.1L1329.1,632.3L1328.4,630.2L1327.7,628.5L1325.8,626.1L1325.1,625.3Z M1324.1,639.7L1324.9,640.7L1325.6,641.8L1327.9,641.1L1327.9,643.1L1326.5,645.0L1325.1,647.0L1325.1,648.9L1323.2,649.3L1320.9,650.7L1320.2,652.8L1319.4,655.1L1317.3,656.9L1313.8,657.2L1311.9,656.0L1309.8,655.8L1309.6,654.5L1310.8,652.5L1312.6,651.3L1313.8,649.6L1315.5,649.2L1317.8,647.3L1320.0,645.9L1320.6,645.2L1321.6,643.2L1322.7,641.8L1323.0,640.5Z M1312.2,657.8L1313.6,658.1L1313.1,659.2L1311.9,658.9Z M1203.8,478.3L1205.0,479.0L1204.1,481.5L1203.6,483.7L1202.4,486.5L1200.8,485.0L1200.5,482.8L1201.9,480.0L1202.7,479.0Z M1178.4,491.1L1179.2,492.4L1178.0,494.3L1175.6,495.8L1173.7,494.8L1173.7,493.1L1175.6,491.6L1176.8,491.1Z M1106.3,515.9L1109.1,518.7L1110.3,520.9L1110.8,522.5L1108.9,524.6L1107.7,525.1L1106.8,524.9L1105.9,522.8L1105.8,520.2L1106.1,517.8Z M1201.7,495.0L1205.5,495.0L1205.7,498.7L1204.1,501.6L1204.1,504.2L1206.2,505.4L1208.5,506.4L1209.9,508.3L1209.9,509.5L1208.1,508.3L1206.4,507.8L1205.5,506.4L1203.8,506.6L1201.7,505.9L1202.4,504.4L1201.2,504.9L1200.1,501.6L1201.0,500.8L1201.0,497.5Z M1205.2,522.8L1206.9,520.6L1208.3,518.5L1211.3,519.0L1213.2,517.8L1213.2,515.9L1215.1,519.0L1215.8,521.8L1214.9,524.2L1213.5,522.5L1213.0,525.8L1210.2,524.4L1210.2,522.1L1208.3,521.6Z M1210.4,509.5L1212.8,509.5L1213.7,512.6L1212.5,514.7L1212.0,515.4L1211.3,514.9L1210.6,513.0L1210.4,511.4Z M1205.0,510.9L1207.6,511.9L1208.5,513.3L1209.7,512.3L1208.3,516.6L1207.8,517.6L1205.9,515.9L1207.1,513.5L1205.0,514.2L1204.8,511.1Z M1198.7,512.3L1199.6,514.2L1197.5,515.7L1194.0,519.5L1193.7,518.7L1196.1,515.9L1198.4,513.3Z M1201.2,507.1L1203.8,507.6L1203.6,510.0L1202.4,510.2Z M1142.3,525.8L1147.4,526.8L1149.3,529.1L1150.2,530.3L1153.3,533.1L1155.2,534.3L1157.5,535.0L1160.4,537.4L1161.8,540.2L1163.6,541.8L1164.8,544.4L1167.4,546.1L1167.4,549.6L1167.2,552.6L1165.8,552.6L1164.1,552.2L1163.4,550.8L1160.4,549.1L1158.7,547.9L1155.7,544.9L1154.2,541.4L1151.4,537.8L1150.2,535.0L1147.9,533.1L1144.1,529.4L1142.3,526.5Z M1165.5,555.0L1167.4,552.9L1169.3,553.4L1173.5,554.8L1177.7,555.4L1178.9,554.1L1180.3,554.8L1183.1,555.9L1185.0,557.1L1187.1,557.4L1187.1,558.3L1187.6,559.7L1183.9,558.5L1179.2,558.4L1176.8,557.6L1174.5,557.1L1173.0,557.4L1170.9,557.1L1168.6,556.4L1168.3,555.5L1166.2,555.2Z M1187.4,558.1L1190.2,558.8L1189.0,559.7Z M1190.9,558.8L1192.5,558.8L1192.1,560.0L1190.7,559.7Z M1192.8,558.8L1195.6,558.1L1198.0,558.5L1198.0,559.5L1194.4,560.2L1192.8,560.2Z M1200.1,558.8L1202.7,558.8L1206.9,558.3L1207.4,558.8L1205.0,560.0L1200.3,559.7Z M1198.0,561.2L1200.8,561.2L1202.2,562.8L1200.3,563.3L1198.0,562.1Z M1208.5,563.3L1209.7,560.9L1212.0,559.3L1217.2,558.8L1215.6,560.2L1212.0,561.6L1209.7,563.1Z M1175.9,534.3L1177.5,535.0L1179.9,533.4L1180.1,532.7L1183.9,531.5L1186.2,528.4L1188.5,527.2L1190.9,524.9L1192.5,522.5L1194.0,523.5L1194.9,524.9L1195.8,525.2L1198.4,526.5L1196.8,528.4L1195.4,528.9L1194.7,531.2L1195.6,533.8L1197.5,536.6L1195.4,537.1L1194.4,539.0L1194.4,540.4L1192.8,542.1L1192.1,544.2L1191.6,546.8L1190.9,548.4L1187.6,548.6L1187.4,547.0L1185.0,546.8L1181.5,547.0L1180.8,546.1L1177.3,545.8L1176.8,542.5L1174.9,540.4L1174.9,539.0L1174.5,536.6Z M1211.6,535.5L1212.5,535.2L1210.9,538.1L1208.1,538.3L1203.8,537.8L1201.0,537.8L1200.5,539.0L1200.5,541.1L1203.4,541.1L1205.5,541.1L1208.3,540.9L1206.9,542.5L1204.3,543.5L1205.7,546.1L1207.4,548.4L1206.9,550.3L1205.0,550.3L1203.8,548.4L1202.7,545.3L1201.2,547.2L1201.2,551.9L1199.1,552.2L1198.9,550.8L1199.4,548.4L1197.7,547.2L1197.7,545.3L1198.7,542.1L1199.6,540.6L1199.8,538.5L1202.2,535.9L1205.0,536.6L1208.5,536.9Z M1217.9,534.3L1219.1,535.5L1220.7,535.5L1219.6,537.4L1220.7,538.3L1219.1,540.9L1218.6,538.5L1218.2,536.9Z M1214.4,546.5L1216.8,546.5L1216.8,547.9L1214.4,547.7Z M1219.1,545.8L1222.6,545.6L1225.7,546.5L1225.0,547.7L1221.5,547.0L1219.1,547.0Z M1226.2,540.9L1229.7,539.9L1233.2,540.9L1233.7,542.5L1235.5,546.8L1237.9,544.4L1242.1,542.5L1245.0,543.7L1248.9,545.1L1253.2,546.5L1256.7,547.9L1260.9,551.2L1263.8,553.1L1265.6,553.8L1263.8,554.8L1266.1,557.8L1268.5,560.2L1270.8,562.6L1272.7,563.3L1269.6,563.3L1266.1,562.8L1264.2,561.4L1261.4,558.5L1257.9,556.9L1255.5,558.5L1254.4,560.7L1249.7,560.4L1246.1,558.1L1243.8,558.5L1242.6,556.4L1244.0,555.0L1242.6,551.9L1237.9,549.8L1234.4,548.4L1230.9,548.4L1230.4,547.0L1228.5,545.6L1232.0,544.9L1229.2,544.2L1226.6,542.5L1225.9,542.1Z M1266.8,552.2L1270.8,551.5L1274.3,549.1L1276.2,549.1L1275.5,551.9L1272.0,553.6L1268.5,553.6Z M1272.7,545.1L1275.5,547.0L1277.9,549.6L1277.1,549.8L1274.3,546.8Z M1335.0,580.3L1338.0,581.0L1337.3,582.2L1335.0,582.0Z M1338.2,578.4L1341.1,577.4L1339.7,578.8Z M904.9,410.4L906.1,410.8L908.7,409.5L909.8,410.0L910.3,408.8L912.5,409.1L913.8,408.8L915.7,408.3L918.1,408.1L918.9,408.3L920.5,407.8L921.5,407.0L921.7,406.3L919.9,406.0L920.5,405.0L921.5,404.5L922.4,402.8L921.4,401.4L919.2,401.5L918.5,401.5L919.1,400.7L918.5,399.3L918.1,397.7L916.9,396.4L915.6,395.9L915.0,394.8L913.6,392.2L913.2,391.8L910.8,391.5L912.2,390.5L911.5,390.0L913.5,387.6L914.1,386.5L913.6,385.8L908.4,386.5L909.4,385.3L911.1,383.2L911.2,382.5L906.5,382.7L905.8,383.9L905.8,385.1L904.7,386.1L904.9,387.1L904.6,388.2L903.7,389.2L905.4,390.2L905.1,391.8L904.7,393.8L905.3,393.5L906.8,391.8L907.4,393.3L906.4,395.1L906.9,395.9L910.1,395.1L911.0,394.9L909.8,396.4L910.8,397.7L911.6,397.7L911.1,398.7L911.1,399.8L909.3,400.1L907.4,400.3L907.1,401.9L908.7,401.7L908.7,403.1L907.3,404.1L905.8,404.7L906.1,405.5L908.2,405.8L909.0,405.6L910.9,406.1L912.0,405.6L911.8,406.0L911.2,406.6L910.1,406.9L908.7,406.9L907.7,407.5L907.6,408.1L906.7,408.9L905.4,410.0Z M900.9,393.5L903.8,394.1L904.9,395.9L905.5,396.7L903.7,398.0L904.0,400.1L904.2,401.2L903.4,403.8L901.9,403.9L898.8,405.0L895.3,406.1L893.7,404.1L895.7,402.5L895.0,402.7L897.2,400.6L894.3,399.9L894.6,398.0L894.8,397.1L898.1,397.1L898.8,396.1L898.8,394.3Z M902.6,386.5L903.7,385.8L904.7,387.5L903.5,387.8Z M901.6,384.8L903.7,383.1L903.7,384.1L901.4,385.8Z M914.8,375.7L916.2,375.4L915.7,377.9L914.5,377.5Z M947.6,445.7L949.7,444.6L954.8,444.4L953.8,446.5L954.3,447.9L953.8,448.8L952.1,447.9L950.0,447.1L947.7,446.4Z M937.6,436.9L939.9,436.2L940.9,437.1L941.2,439.7L940.9,441.9L939.7,441.9L938.5,442.7L938.0,441.9L938.0,440.0L937.5,438.0Z M940.4,431.3L940.7,433.5L940.4,435.2L939.9,435.8L939.0,434.9L938.5,433.5L938.5,432.8L939.7,432.0Z M973.6,451.7L974.9,451.7L977.3,452.3L980.1,452.5L980.0,453.1L976.6,453.4L973.6,452.6Z M994.2,453.1L995.7,452.9L997.4,452.3L999.5,451.4L998.1,453.0L998.3,453.3L997.4,453.5L995.9,454.3L994.6,453.9Z M923.8,440.8L925.6,439.8L926.4,440.5L925.5,441.6L924.6,441.1Z M972.8,442.5L975.2,443.5L976.1,445.2L974.9,444.6L973.3,443.3Z M983.4,450.1L984.6,449.5L984.3,450.6Z M979.2,441.9L980.8,441.6L980.3,442.5Z M944.4,392.5L946.5,391.2L947.9,391.8L947.2,394.1L944.9,394.1Z M941.3,393.1L943.4,393.0L943.7,394.5L942.0,394.6Z M961.1,387.1L963.0,385.1L962.7,386.8L961.3,388.3Z M956.8,390.5L958.5,387.1L958.0,388.5Z M969.8,383.7L970.7,382.7L972.8,383.1L971.6,384.1Z M970.2,381.7L971.4,381.2L972.4,381.9L971.2,382.4Z M964.4,377.1L966.0,376.6L965.8,377.7Z M944.2,293.3L951.2,293.3L955.9,292.3L960.6,293.9L968.8,298.6L963.0,302.7L961.8,305.2L958.2,309.7L953.5,307.7L950.5,304.2L948.9,301.7L945.3,300.2L944.2,296.5Z M961.8,292.8L965.3,290.1L974.7,290.7L981.8,291.7L980.6,294.9L973.5,296.5L966.5,295.5Z M967.7,301.7L973.5,302.7L974.7,305.2L970.0,306.2L967.7,304.2Z M1214.9,457.5L1216.5,457.2L1215.8,458.0Z M1010.4,552.6L1011.1,553.4L1010.9,554.1Z M878.6,470.4L880.5,470.2L879.3,471.5Z M884.9,469.7L885.9,469.9L884.7,471.2Z M938.3,530.3L939.2,530.5L938.7,531.2Z M1136.1,507.1L1136.9,508.3L1136.4,511.6L1135.7,510.7Z M1146.5,535.7L1148.4,537.4L1147.7,537.6Z M1150.2,541.4L1151.7,543.0L1150.7,543.2Z M1165.5,543.0L1167.9,542.8L1169.0,545.8L1167.4,545.6Z M1171.2,545.1L1172.8,545.6L1171.9,546.5Z M1183.1,555.5L1186.4,555.2L1186.0,555.9L1183.4,555.9Z M1233.7,552.6L1235.1,553.1L1234.4,555.2L1233.4,554.5Z M1226.6,556.7L1227.8,555.9L1227.6,557.8Z M1236.7,540.9L1238.6,541.4L1237.9,541.8Z"/>
<path fill="#fff" d="M986.7,436.4L990.0,436.6L992.1,436.1L996.6,434.1L1000.8,434.0L1003.6,436.1L1006.4,436.9L1011.6,436.9L1015.8,435.5L1016.2,433.7L1014.7,431.3L1011.6,429.6L1008.8,427.3L1007.1,426.4L1006.0,425.8L1004.3,424.9L1001.5,425.5L999.1,427.0L996.8,426.7L994.7,424.5L997.5,422.9L997.0,422.3L993.5,422.0L992.3,420.8L990.6,421.1L989.3,423.2L988.1,424.9L985.6,427.8L983.9,430.7L982.9,432.7L984.1,434.4Z M1004.3,424.6L1001.3,424.4L1000.1,422.3L1001.5,421.1L1004.8,420.4L1006.7,419.3L1009.7,419.1L1010.4,419.3L1008.3,420.2L1007.1,420.8L1007.8,422.6L1006.4,424.1L1005.0,424.5Z M981.0,438.6L982.9,437.1L986.5,437.1L987.2,437.7L984.1,438.6Z M1029.9,423.8L1033.9,421.7L1038.2,419.9L1041.7,419.9L1042.9,421.1L1043.3,424.6L1039.3,424.6L1038.2,427.0L1036.5,427.3L1038.6,430.7L1041.2,432.7L1042.4,434.9L1042.9,436.4L1045.9,436.1L1046.4,437.2L1042.9,437.5L1042.9,439.7L1044.0,441.6L1045.0,445.2L1045.2,447.1L1044.0,448.2L1040.5,449.0L1037.0,447.9L1034.6,446.5L1033.5,444.4L1034.2,441.6L1034.6,439.1L1036.7,438.6L1034.6,437.7L1033.5,436.1L1032.5,434.7L1029.9,431.3L1029.9,428.4L1028.3,426.7L1028.8,424.9Z M712.7,434.4L712.2,431.3L712.9,427.8L712.2,426.4L713.9,424.6L715.0,423.5L717.4,422.9L718.5,423.5L717.4,425.5L715.7,427.0L715.3,429.8L715.7,432.7L714.6,434.4L713.4,434.9Z M719.7,423.2L721.4,422.6L724.4,422.9L727.2,423.2L729.4,424.6L729.8,426.1L727.2,425.2L726.3,427.5L726.1,430.1L724.7,431.0L724.2,428.7L721.8,429.0L722.5,427.3L722.1,425.2L720.4,423.8Z"/>
<path fill="#bce0dc" stroke="#fff" stroke-width=".8" stroke-linejoin="round" d="M495.3,344.1L501.2,347.0L507.1,349.8L514.1,351.8L519.3,355.3L516.5,357.6L512.9,361.8L510.6,361.8L505.9,360.3L503.5,357.6L498.1,355.7L496.5,358.4L495.3,359.6Z M995.9,341.6L1002.9,342.9L1008.8,346.2L1011.8,347.4L1015.4,351.8L1012.3,354.9L1007.6,355.3L1000.5,353.8L995.9,353.0L994.7,351.4L998.2,356.5L1000.1,361.5L1005.2,363.7L1007.6,362.6L1005.2,359.2L1007.6,359.9L1013.5,361.1L1012.3,357.6L1017.0,354.1L1021.7,355.3L1022.2,351.8L1020.5,351.0L1020.1,345.3L1026.4,347.8L1025.2,349.8L1027.6,352.2L1030.4,349.8L1032.3,349.0L1035.8,347.8L1042.9,345.8L1045.2,346.6L1047.5,345.8L1052.2,345.3L1057.0,344.5L1060.5,343.7L1060.5,340.4L1061.7,342.9L1069.9,342.5L1074.6,345.3L1078.1,346.6L1079.3,341.6L1075.8,338.3L1075.3,334.0L1079.3,328.8L1081.6,326.5L1082.8,325.2L1087.5,327.4L1088.7,333.1L1089.9,339.5L1091.0,345.8L1088.7,351.8L1086.3,353.8L1089.9,352.6L1092.2,349.8L1093.4,344.5L1094.5,339.5L1092.9,333.1L1095.7,328.8L1100.4,329.6L1101.6,333.1L1107.5,331.0L1109.8,327.9L1113.4,335.3L1114.5,338.3L1112.2,331.8L1108.2,324.7L1115.7,322.9L1122.8,319.7L1121.6,322.5L1127.5,315.5L1136.9,313.1L1143.9,312.1L1151.0,311.1L1155.7,308.2L1163.4,304.2L1168.6,306.2L1172.1,309.2L1181.5,310.7L1185.0,315.0L1178.0,320.6L1169.8,325.6L1176.8,323.8L1185.0,324.3L1186.2,323.8L1199.1,326.5L1207.4,326.5L1215.6,324.3L1220.3,325.6L1222.6,330.1L1221.5,335.3L1226.2,336.2L1230.9,333.1L1236.7,332.7L1241.4,334.0L1246.1,329.6L1248.9,327.0L1252.0,331.0L1261.4,329.2L1269.6,331.0L1270.8,333.1L1276.7,335.7L1284.9,335.3L1292.0,336.6L1296.7,341.6L1300.2,341.2L1304.9,341.2L1310.8,341.6L1317.8,343.7L1319.0,339.5L1324.9,340.4L1331.9,340.8L1337.8,342.5L1341.3,344.1L1341.3,359.6L1337.8,361.1L1335.4,360.7L1335.0,362.6L1337.8,366.0L1339.7,369.6L1334.2,368.9L1328.4,371.4L1323.7,374.3L1318.5,377.9L1313.1,376.1L1308.4,376.8L1305.6,378.6L1302.1,381.3L1301.4,384.8L1299.7,386.5L1301.8,390.8L1299.0,394.8L1298.5,396.4L1294.3,398.0L1294.3,400.6L1291.2,401.2L1290.3,404.4L1286.5,407.8L1285.4,402.8L1283.7,394.8L1286.1,388.2L1289.6,384.8L1293.8,379.6L1298.5,376.1L1302.5,372.5L1304.9,368.9L1301.4,370.7L1295.5,375.4L1295.5,371.4L1287.2,372.5L1282.5,379.6L1272.7,379.6L1268.5,379.6L1260.2,380.3L1254.8,379.9L1249.7,383.1L1243.8,388.2L1240.2,393.1L1236.7,395.8L1241.4,398.0L1246.1,397.4L1250.6,400.3L1250.4,403.8L1248.9,407.5L1248.5,413.6L1245.0,418.2L1242.6,421.7L1239.1,425.5L1235.5,429.3L1231.3,431.8L1228.3,431.0L1225.4,433.3L1225.2,432.4L1226.9,428.4L1226.2,425.5L1231.3,425.2L1233.2,421.1L1234.8,415.8L1229.7,417.6L1226.2,417.6L1225.4,414.0L1222.6,412.4L1217.9,411.2L1217.9,409.7L1215.6,404.4L1213.2,401.2L1208.1,399.5L1202.7,400.3L1200.3,401.9L1200.5,405.3L1198.4,409.7L1195.1,412.1L1192.5,411.2L1189.7,410.0L1186.9,409.7L1181.5,412.4L1176.8,413.0L1173.3,412.7L1168.6,409.7L1165.0,409.4L1160.4,409.7L1158.7,406.6L1153.3,405.3L1150.7,404.1L1149.3,407.5L1148.6,410.6L1147.0,411.2L1141.5,410.6L1135.7,408.1L1129.8,410.6L1126.3,412.1L1123.5,413.3L1122.3,411.2L1118.8,411.8L1113.4,407.5L1108.7,408.1L1106.5,408.1L1104.0,404.4L1101.1,400.3L1098.1,397.4L1093.4,399.3L1090.8,398.0L1085.6,397.4L1082.8,394.1L1078.6,394.8L1073.4,395.8L1069.9,397.1L1065.2,398.0L1061.7,398.3L1062.1,403.4L1059.8,407.5L1062.8,406.6L1058.4,408.8L1055.8,407.2L1051.1,407.5L1047.5,408.4L1044.0,406.3L1039.3,405.3L1037.0,405.3L1034.6,408.1L1032.3,410.6L1029.5,409.7L1028.3,415.2L1029.5,417.3L1031.8,418.2L1033.5,420.8L1033.9,421.7L1031.1,423.2L1028.8,426.1L1029.9,431.3L1032.5,434.7L1029.5,436.1L1027.6,434.4L1024.0,432.1L1020.5,431.6L1017.0,430.7L1012.3,430.1L1008.8,427.3L1007.1,426.4L1004.5,424.9L1006.4,422.6L1008.3,420.2L1010.4,419.3L1008.1,419.3L1011.8,417.0L1012.3,413.6L1012.5,411.8L1008.8,410.9L1006.4,409.4L1002.9,409.4L1001.7,407.5L998.7,405.3L999.1,403.4L995.9,403.4L993.0,404.1L992.3,400.6L995.1,399.6L991.9,396.1L990.7,392.8L987.4,392.2L984.6,391.2L983.6,387.1L982.7,386.1L982.9,383.1L984.3,379.9L984.1,379.6L985.3,378.9L986.5,378.0L989.3,378.2L987.6,377.1L985.7,375.4L983.6,376.1L987.6,372.5L991.9,367.8L988.8,364.1L990.0,360.3L988.1,357.3L988.8,352.2L986.5,349.0L985.3,345.8L986.2,343.5L990.7,340.4Z M951.9,398.3L955.0,397.4L957.1,396.4L959.4,395.4L962.5,396.1L962.2,396.7L964.4,396.7L965.3,395.8L965.1,394.9L967.9,393.8L971.9,394.8L971.9,396.7L973.5,398.0L974.5,402.2L972.8,403.4L973.8,406.0L974.9,408.1L971.6,412.1L971.4,413.3L967.7,412.4L964.8,413.0L962.5,412.1L959.9,409.7L958.0,409.4L956.4,408.8L953.1,407.8L953.5,406.6L952.6,404.1L951.4,401.5Z M973.5,398.0L974.5,402.2L972.8,403.4L973.8,406.0L978.2,404.7L982.9,405.6L987.2,406.3L990.2,406.3L993.0,404.1L992.3,400.6L995.1,399.6L991.9,396.1L990.7,392.8L987.4,392.2L984.6,391.2L980.8,392.5L979.4,395.1L978.2,397.1L975.6,398.3Z M1253.6,396.7L1254.8,401.2L1255.1,406.0L1256.2,410.6L1258.3,414.7L1254.6,413.0L1253.6,417.3L1254.8,420.2L1255.3,422.6L1253.9,420.8L1252.2,422.9L1252.0,419.6L1252.2,415.2L1252.2,410.6L1251.5,406.0L1251.3,402.8L1251.8,399.6Z M1053.4,337.0L1047.5,336.6L1042.9,334.4L1039.3,331.8L1040.5,328.8L1042.9,325.2L1046.4,322.0L1048.7,317.3L1054.6,313.6L1064.0,311.1L1073.4,308.2L1080.0,307.7L1078.1,311.1L1068.7,315.0L1060.5,318.3L1057.0,322.0L1052.2,325.2L1051.1,328.8L1048.7,333.1L1052.2,335.3Z M1025.2,289.0L1033.5,287.4L1038.2,288.5L1033.5,291.2L1027.6,290.7Z M1042.9,291.2L1049.9,290.1L1057.0,290.1L1064.0,287.9L1059.3,286.8L1049.9,286.8L1045.2,288.5Z M1052.2,284.6L1057.0,282.4L1059.3,284.1Z M1142.7,297.0L1148.6,291.7L1153.3,293.9L1154.5,297.6L1151.0,298.6L1146.2,298.6Z M1152.1,302.7L1159.2,296.0L1165.0,300.2L1160.4,304.2L1153.3,303.2Z M1139.2,291.7L1143.9,285.7L1147.4,287.9L1146.2,291.2Z M1240.2,317.3L1243.8,312.1L1249.7,312.1L1257.9,315.5L1255.5,317.8L1247.3,318.3L1242.6,318.8Z M1263.8,315.9L1272.0,316.9L1268.5,318.3L1262.6,317.3Z M1247.3,324.7L1255.5,324.3L1252.0,325.6L1248.5,325.2Z M1338.2,335.7L1341.3,335.7L1341.3,333.1L1339.0,333.6Z M495.3,335.7L500.9,334.9L500.0,333.1L495.3,333.1Z M1032.3,343.7L1034.6,341.6L1036.5,343.3L1034.2,344.9Z M1055.8,339.5L1058.1,337.4L1060.5,339.5L1058.1,340.8Z M1081.6,325.6L1086.3,324.3L1086.3,326.1Z M1302.5,381.0L1304.9,381.3L1303.7,383.1Z M1283.7,408.8L1285.4,408.1L1284.7,410.0Z M1265.6,424.4L1268.2,424.1L1263.8,426.7L1261.9,427.3Z M1260.2,427.5L1262.6,427.3L1260.2,429.0Z M1241.4,394.1L1243.3,394.5L1242.1,395.8Z"/>
<path fill="#8fcdc7" d="M1249.4,435.5L1250.8,438.3L1252.0,440.8L1249.7,444.4L1249.7,447.9L1248.7,449.8L1249.4,451.4L1247.1,453.5L1246.6,452.5L1245.4,452.7L1244.7,454.3L1243.8,453.3L1243.1,454.3L1240.2,454.3L1239.8,453.3L1240.0,455.1L1238.6,456.2L1237.4,457.4L1235.8,456.2L1235.8,455.4L1236.3,454.3L1235.5,454.2L1233.2,454.5L1229.4,455.1L1227.3,455.9L1225.9,456.0L1225.9,454.9L1227.1,454.7L1228.5,453.5L1230.1,452.2L1233.7,451.8L1236.0,451.4L1237.4,451.9L1238.1,451.4L1237.9,450.1L1239.3,449.0L1239.5,447.1L1241.0,446.5L1240.5,447.6L1240.7,448.4L1243.1,447.4L1245.0,445.5L1246.4,443.5L1246.8,442.7L1246.6,440.0L1247.3,438.0L1248.0,436.4Z M1247.5,435.8L1248.9,434.7L1249.7,433.3L1251.1,432.4L1254.9,434.4L1257.6,431.4L1260.9,430.3L1259.8,427.4L1257.4,428.4L1255.3,427.3L1251.8,424.1L1251.3,424.4L1251.1,428.5L1250.4,430.7L1248.2,430.4L1248.0,432.1L1246.8,433.0Z M1225.9,456.2L1227.8,457.9L1228.5,459.1L1227.3,461.4L1225.4,463.8L1224.3,463.0L1224.3,460.9L1223.3,459.3L1222.9,458.0L1223.6,457.2L1224.7,457.0Z M1230.9,455.7L1233.3,455.0L1234.7,455.4L1234.8,456.3L1233.7,457.9L1232.0,457.2L1230.9,459.3L1229.4,458.0L1228.5,457.6L1230.1,456.3Z M1218.4,476.3L1219.8,474.5L1219.1,475.3Z"/>
<path fill="none" stroke="#fff" stroke-width=".9" stroke-linejoin="round" stroke-linecap="round" d="M587.0,341.2L587.0,376.8L591.4,377.5L595.2,381.3L597.5,379.6L601.0,379.6L604.6,383.1L608.6,389.2L612.6,391.2L612.8,394.1L611.6,395.8 M628.8,413.6L694.6,413.6L694.7,412.4L696.0,414.6L699.8,414.9L703.3,416.4L708.0,416.7 M742.0,425.5L750.3,425.5L751.9,424.6L753.1,422.0L753.8,420.5L755.7,418.3L757.8,418.6L759.0,419.3L759.0,423.5L759.9,424.9L760.9,425.8 M738.8,428.1L742.0,425.5 M643.1,459.9L648.8,459.3L657.5,463.0L664.0,463.0L664.0,461.7L668.0,461.7L671.8,464.8L672.7,467.4L676.0,468.9L677.4,466.9L680.0,466.9L682.6,470.7L684.5,472.7L685.4,475.5L689.9,476.8 M708.0,416.7L710.6,415.8L718.8,419.9L719.7,421.1L722.1,422.6L724.4,424.6L724.7,431.3L723.0,433.5L724.4,434.9L732.7,431.8L732.4,430.4L735.0,429.6L738.8,428.1 M701.9,420.5L704.9,420.5L708.0,420.2L710.3,419.9L711.5,418.5L712.9,421.1L715.0,421.1L717.4,420.5L719.5,421.1 M722.3,434.9L724.0,435.6L726.3,435.5L730.8,433.5L732.7,431.7 M732.7,430.6L735.9,430.6L739.2,429.8L738.8,428.1 M626.9,422.0L638.6,422.6L643.4,422.6 M626.4,434.1L657.3,434.1 M643.4,413.6L643.4,422.6L643.4,427.5L643.4,434.1 M636.3,434.1L636.3,442.5L649.0,453.3L648.8,459.3 M650.3,434.1L650.3,447.9L649.0,450.3L649.0,453.3 M650.3,447.9L696.0,447.9 M662.0,436.9L662.0,463.0 M657.3,425.5L673.8,425.5L673.8,436.9L657.3,436.9L657.3,425.5 M645.6,413.6L645.6,416.7L649.2,421.1L651.6,425.5L657.3,427.0 M673.8,413.6L673.8,425.5 M662.0,436.9L678.5,436.9L678.5,447.9 M676.2,447.9L676.2,461.2L667.8,461.2 M673.8,422.7L691.4,422.7 M673.8,431.3L686.8,431.3L691.5,432.7 M678.5,439.7L694.3,439.7 M696.0,442.2L696.0,449.3 M676.2,449.3L683.3,449.3L683.3,454.6L688.0,455.7L692.7,456.4L696.2,457.0 M696.3,449.3L696.3,457.0L697.3,458.6L697.3,463.8L697.9,467.1 M697.3,458.6L704.0,458.6 M689.9,413.6L691.3,422.6L691.6,424.6L691.6,429.8L691.5,432.7L693.2,438.0L694.3,439.7L696.0,442.2 M691.6,429.8L704.0,429.8 M693.2,438.0L703.5,438.0 M696.0,449.3L708.0,449.3 M701.9,420.5L700.2,424.1L700.2,426.4L704.0,429.8L704.2,432.1L706.3,434.7L704.2,437.5L703.3,439.1L706.3,443.0L708.0,447.9L708.0,449.3L706.8,453.3L704.2,458.6L703.0,463.8L707.5,463.8L708.0,465.8 M708.9,447.9L711.5,445.7L716.2,445.2L719.0,442.2L724.2,444.1L729.1,438.0 M705.4,432.7L712.0,432.7 M712.7,434.9L712.7,445.2 M719.0,434.9L719.0,442.2 M713.9,434.9L722.1,434.9 M706.3,421.1L711.3,422.9L712.4,425.2 M730.8,433.3L729.1,433.3L729.1,440.5L740.2,440.5 M730.8,434.1L741.3,434.1L742.0,435.8L742.8,435.9L744.6,436.9 M721.6,449.1L739.9,449.1 M708.0,449.3L726.3,449.0 M706.1,453.3L723.0,453.3L724.9,452.7L728.0,453.0L731.0,453.8L733.8,456.2 M723.0,453.3L727.7,460.9 M718.5,464.5L725.6,464.8L726.8,464.5 M717.1,453.3L718.5,461.2L718.5,463.8L712.4,463.8L712.7,465.6 M711.0,453.3L710.6,465.6 M724.2,444.1L726.3,447.1L721.6,449.0 M729.1,440.5L731.5,441.9L734.3,441.4L735.7,441.6L737.4,444.4 M746.0,425.5L745.8,432.1L745.6,436.9 M745.8,432.1L750.7,432.1L751.9,431.6 M747.9,425.5L747.9,432.1 M751.2,424.6L751.5,431.0 M745.6,434.0L749.6,434.1L749.6,436.1 M701.6,504.7L701.6,503.0L702.8,500.8L705.9,500.8L703.5,498.1L704.5,498.1L704.5,496.7L708.8,496.7L708.7,501.3L709.4,501.3 M708.8,496.7L710.8,495.0 M711.0,501.8L708.3,504.9L706.6,506.5 M708.3,504.9L710.3,506.1L712.2,506.4L712.2,507.6 M713.1,508.3L714.6,506.4L716.9,506.1L719.0,504.0L722.8,503.5 M716.9,512.8L719.3,513.0L721.6,513.3 M723.5,520.2L723.5,517.6L724.2,516.6 M749.8,492.1L749.8,496.0 M750.7,511.1L747.9,512.8L746.8,517.1L748.2,519.5L749.1,522.5L753.6,522.5L755.2,524.6L759.7,524.4L759.0,528.4L760.1,531.0L758.7,534.8L761.1,536.2 M761.1,536.2L754.3,535.0L754.3,536.4L755.9,537.6L753.8,537.8L753.8,539.5L755.2,541.6L753.9,548.9 M753.9,548.9L752.2,547.9L747.0,544.6L745.1,542.1L741.3,539.2 M741.3,539.2L739.0,538.1L736.2,537.4L733.1,535.7 M741.3,539.2L740.6,542.5L738.1,545.1L734.5,547.0L733.4,549.8L731.2,549.3L729.4,549.3L729.6,547.0 M753.9,548.9L747.0,551.0L744.6,556.2L747.0,561.2L752.4,561.4L752.4,565.0L754.7,564.8 M754.7,564.8L756.9,568.5L756.2,573.3L755.2,576.0L756.2,577.4L755.0,580.5L752.9,582.6 M754.7,564.8L757.1,565.2L764.6,561.9L764.8,566.6L767.0,568.3L772.6,570.7L776.1,571.6L776.8,577.4L781.1,577.6L781.3,580.1L783.2,582.2L781.8,586.1L781.6,587.0 M781.6,587.0L779.4,584.9L773.3,585.6L771.2,592.1 M771.2,592.1L767.2,593.5L765.1,591.8L762.5,591.0L760.4,593.5 M755.0,580.5L757.3,584.2L756.9,587.8L758.0,590.3L758.7,593.5L760.4,593.5 M760.4,593.5L757.6,597.7L757.6,602.7L754.5,607.8L753.8,612.9L752.9,616.8L754.3,622.1L752.6,627.4L751.2,632.8L749.6,638.3L749.6,645.3L749.8,651.0L749.6,656.9L747.2,662.8L746.0,668.3L748.4,670.5L749.1,673.6L757.6,674.6 M757.1,675.7L757.1,682.9 M781.6,587.0L782.4,591.8L787.4,592.3L788.1,596.5L790.7,596.6L790.0,600.4 M771.2,592.1L775.0,596.0L780.6,599.0L782.9,600.0L780.6,604.5L786.0,605.0L787.2,605.0L790.0,600.4 M790.0,600.4L791.9,602.0L791.9,604.3L786.9,607.6L782.9,612.2 M782.9,612.2L781.5,618.1L781.1,621.8 M782.9,612.2L786.7,614.0L790.2,615.5L792.8,618.4L792.8,621.4 M777.3,519.0L775.0,522.5L774.5,524.9L775.7,526.8 M775.7,526.8L772.6,529.4L767.9,529.6L766.5,531.9L769.3,533.8L764.4,537.1L761.1,536.2 M775.7,526.8L777.5,528.4L778.2,531.9L777.5,535.2L780.1,536.2L785.5,534.5 M783.9,525.1L783.6,530.1L782.0,534.3L785.5,534.5 M791.4,525.6L790.2,530.8L790.0,533.6 M785.5,534.5L790.0,533.6L794.9,533.1L796.9,529.4 M897.6,434.4L899.3,434.1L902.8,434.4L903.7,435.2L902.1,436.9L902.1,439.1L901.9,440.5L900.7,440.8L901.9,442.5L901.1,444.1L901.9,444.9L900.7,446.5L900.9,447.4 M914.1,430.1L915.0,431.3L916.7,431.6L919.9,431.8L922.3,432.7L925.8,433.0 M935.9,429.0L936.4,427.8L934.5,427.3L934.8,424.9L934.3,423.2L934.8,422.9L934.3,421.4L932.6,422.0L932.6,420.8L934.8,418.5L936.2,417.9L936.2,415.8L937.6,413.6L934.0,413.0L933.3,412.1L931.9,412.1L929.8,410.6L928.2,410.6L927.9,409.7L925.8,408.4L924.2,407.2 M926.3,406.3L928.4,406.3L930.0,406.0L931.9,406.9L931.7,408.1L932.4,408.3L933.1,409.7L932.6,410.3L933.6,411.2L933.3,412.1 M932.6,410.3L931.9,412.1 M932.4,408.3L932.9,406.3L932.4,405.0L934.3,404.4L934.9,403.4L934.8,402.3L935.2,400.4 M938.6,395.1L940.4,395.4 M953.1,407.8L950.0,408.4L947.0,409.7L947.7,411.5L950.7,414.3L950.7,414.9L948.9,415.8L948.9,418.2L947.0,417.9L943.0,418.5L940.9,418.2L938.5,417.6L936.2,417.9 M940.9,418.2L940.9,419.5L942.9,419.9L942.9,421.0L942.0,421.7L940.2,421.3L939.5,423.0L938.2,421.3L936.9,422.6L934.8,422.9 M942.9,419.9L944.6,419.8L947.0,419.5L947.4,420.5L950.5,421.1L952.6,421.3L955.1,420.5L956.1,420.1 M950.5,421.1L949.8,422.0L950.3,423.2L950.7,423.8 M950.3,424.2L952.4,424.1L954.3,424.1L955.2,423.2L955.2,422.0L956.6,421.4L957.1,421.1 M950.7,414.9L952.8,414.9L953.5,413.6L956.1,414.4L958.0,414.9L958.5,416.7L957.1,418.2L957.1,419.6L956.1,420.1 M962.5,412.1L960.8,413.3L958.7,414.1L958.0,414.9 M958.5,416.7L962.5,417.3L964.4,416.1L966.5,415.2L970.2,415.5L971.4,413.3 M970.2,415.5L972.1,416.7L970.0,418.2L968.1,421.4L966.0,422.2L963.0,422.7L962.5,422.9L959.7,422.7L957.1,421.1L956.1,420.1 M972.1,416.7L976.1,416.8L980.8,415.9L982.9,418.2L984.3,420.2L984.6,424.1L988.1,424.6 M980.8,415.9L982.9,415.2L986.9,417.0L989.0,421.4L986.2,421.4L984.6,424.1 M985.5,429.1L981.8,428.0L978.0,429.4L972.1,428.8L971.6,427.8L971.2,426.4L968.6,426.1L968.8,424.9L966.0,422.2 M971.6,427.8L970.9,429.8L972.4,430.7L970.9,433.3L972.2,435.9L975.9,435.5L979.6,436.1L980.1,434.9L980.8,435.9L980.1,437.1L979.4,437.6 M980.1,434.9L982.7,434.0L984.1,434.2 M970.9,433.3L969.1,433.4L966.7,434.4L966.5,436.1L967.1,437.2L969.5,437.1L972.2,435.9 M963.9,434.4L964.4,432.5L965.5,432.5L966.7,434.4 M967.1,437.2L966.8,439.4L965.3,440.5 M963.0,422.7L963.0,425.8L964.4,426.0L963.2,427.5L964.1,429.6L962.7,429.8L961.7,432.5 M955.2,424.9L958.0,424.8L960.6,425.2L963.0,425.8 M955.2,424.9L956.1,427.8L959.7,431.3L961.7,432.5 M962.7,429.8L966.0,431.3L965.5,432.5 M966.0,431.3L968.4,431.6L969.1,433.4 M967.8,391.2L972.1,390.2L976.8,390.2L980.8,392.5 M975.5,385.2L977.8,384.8L980.6,386.3L982.7,386.1 M944.6,381.5L946.0,378.6L947.7,376.8L947.0,374.3L948.6,373.1L946.7,371.8L947.2,369.8L946.7,365.2L951.0,363.3L951.4,361.5L950.5,361.1L952.4,358.4L952.6,355.3L954.7,354.5L956.8,351.0L956.1,350.0L959.0,347.4L960.8,345.8L965.3,346.2L966.5,343.5 M966.5,343.5L969.8,345.6L973.8,348.0L973.5,351.0L974.7,352.6L974.0,354.9L974.9,356.5 M966.5,343.5L968.4,342.5L970.9,344.9L977.0,345.3L978.7,342.9L980.6,340.0L984.1,339.1L987.2,341.6L986.2,343.5 M971.4,413.3L971.6,412.1 M1015.8,435.5L1018.2,435.5L1020.5,436.6L1021.0,439.4L1023.6,440.5L1022.6,441.4L1021.9,441.4L1022.9,444.4L1022.4,445.5L1023.6,447.4 M1023.6,447.4L1017.9,447.6L1014.7,447.6L1009.5,448.7L1005.2,448.7L1004.3,450.1L1003.1,451.0 M1020.5,436.6L1024.0,436.2L1027.8,436.6L1027.3,434.4 M1024.0,436.2L1025.5,437.5L1026.2,439.1L1027.6,441.1L1027.6,442.7 M1023.6,440.5L1026.4,442.7L1027.6,442.7L1030.6,440.5L1031.8,441.4L1031.1,443.0L1033.2,444.1 M1023.6,447.4L1025.0,450.6L1026.4,451.4L1025.0,454.6L1026.9,458.0L1030.9,461.7L1030.4,463.9L1032.5,466.6 M1045.2,447.1L1047.1,446.8L1052.7,444.6L1057.7,446.5L1061.9,449.0L1062.1,451.7 M1062.1,451.7L1060.5,455.7L1061.4,462.5L1063.5,462.7L1061.4,466.7L1063.8,470.2L1065.9,470.9L1065.9,473.5L1067.1,475.0L1063.1,478.5 M1061.4,466.7L1065.2,467.9L1074.1,466.6L1074.3,464.0L1078.6,461.7L1081.2,461.4L1083.5,457.5L1082.6,455.9L1085.4,455.7L1086.6,452.7L1085.6,450.6L1088.9,448.4L1093.4,447.9L1094.3,447.4 M1062.1,451.7L1064.7,452.5L1066.8,451.0L1069.9,449.8L1070.6,447.6L1074.6,447.0L1077.6,447.4L1081.6,446.3L1083.3,445.5L1084.0,444.4L1086.1,445.5L1086.6,448.7L1090.6,446.7L1094.3,447.4 M1074.6,447.0L1074.8,445.2L1069.2,442.6L1064.9,439.7L1063.8,436.6L1059.5,435.8L1059.5,433.5L1056.0,431.8L1052.2,436.1L1049.9,436.1L1049.9,425.5L1056.0,423.8L1061.9,427.3L1064.0,429.8L1070.8,429.3L1073.6,431.3L1073.4,434.1L1074.6,434.4L1078.3,436.9L1080.7,435.8L1084.0,433.8L1084.9,433.3L1091.0,431.6L1093.8,430.7L1099.7,431.6L1106.8,433.5 M1041.7,434.8L1047.3,434.1L1049.9,436.1 M1106.8,433.5L1106.8,431.3L1108.2,430.7L1107.2,426.7L1112.2,424.9L1111.7,424.1L1113.4,419.1L1119.2,419.3L1119.7,415.5L1123.5,413.3 M1106.8,433.5L1101.6,436.9L1097.8,438.6L1094.3,438.3L1091.5,441.1L1091.7,443.5L1094.5,446.8L1094.3,447.4 M1078.3,436.9L1081.2,437.5L1084.0,439.4L1084.7,437.7L1090.1,437.5L1086.8,439.3L1084.0,439.4L1081.2,440.0L1076.9,441.1L1079.0,444.6L1077.6,447.4 M1084.0,440.8L1091.5,441.1 M1078.6,482.3L1084.0,480.5L1082.8,477.3L1083.3,475.0L1081.6,474.0L1084.2,471.5L1087.5,471.2L1090.6,466.6L1093.6,463.5L1093.1,461.2L1095.5,460.4L1092.4,458.0L1092.2,454.1L1098.8,451.7L1101.1,451.9 M1094.3,447.4L1096.9,450.6L1101.1,451.9L1103.2,455.7L1103.7,458.8L1102.8,459.9L1103.7,463.0L1108.7,465.8L1111.2,466.1L1115.9,469.2L1120.4,471.7L1125.3,471.7L1127.0,473.2L1129.1,470.9L1133.6,472.0L1134.7,474.2L1137.3,470.4L1142.3,468.7L1144.4,470.9L1147.0,470.7 M1108.7,465.8L1106.5,469.4L1114.1,473.0L1118.5,474.7L1125.3,475.5L1125.3,471.7 M1127.0,473.2L1129.3,474.7L1134.7,474.2 M1125.3,475.5L1125.3,480.3L1127.0,480.8L1127.2,484.2L1127.6,486.7 M1125.3,475.5L1129.3,476.5L1129.3,478.3L1135.4,479.0L1132.6,481.3L1132.6,482.8L1135.2,482.3L1135.9,487.7L1135.2,489.4 M1135.9,487.7L1137.3,484.0L1140.6,478.5L1142.0,476.5L1147.0,470.7 M1147.0,470.7L1150.2,472.7L1150.2,476.8L1147.7,479.5L1147.7,481.8L1150.7,483.5L1152.1,484.2L1151.4,486.2L1153.5,487.7L1156.1,487.9L1153.5,490.4L1151.0,491.1L1148.1,494.8L1147.2,495.0L1150.0,500.4L1149.1,503.0L1151.4,509.5L1152.4,511.1L1150.2,514.9 M1153.5,490.4L1154.7,492.6L1156.4,492.6L1156.1,497.5L1158.2,495.8L1161.3,495.3L1164.3,497.5L1164.6,500.1L1166.5,502.0L1165.5,505.2L1160.4,505.4L1158.9,506.8L1160.1,511.4 M1165.5,505.2L1167.4,504.9L1170.9,504.2L1171.2,509.7L1168.3,510.9L1167.2,513.0L1163.9,514.5 M1170.9,504.2L1170.9,500.6L1168.8,499.6L1165.5,495.8L1162.5,493.1L1164.8,490.9L1160.1,487.5L1158.5,485.5 M1156.1,487.9L1157.5,488.4L1158.5,485.5L1160.4,485.2L1165.8,483.3L1169.0,484.2L1169.0,486.5L1172.1,487.7 M1153.5,523.8L1155.9,525.6L1158.2,524.4 M1175.9,534.3L1178.0,536.9L1181.0,536.6L1183.4,535.5L1186.0,535.7L1188.1,533.8L1190.0,531.0L1190.0,529.1L1194.4,529.1 M1186.4,528.2L1188.1,529.6L1189.3,527.5 M1249.7,545.1L1249.7,560.4 M1209.7,561.2L1212.0,560.7L1212.3,561.4 M1124.6,413.0L1126.3,415.8L1131.9,419.9L1132.2,424.9L1138.0,425.8L1142.5,427.5L1144.8,432.1L1155.2,432.4L1165.0,435.2L1170.9,433.0L1177.7,432.4L1181.3,429.3L1180.1,427.3L1185.3,426.1L1192.3,421.7L1199.6,420.5L1200.1,417.6L1196.8,416.7L1190.9,417.0L1190.0,416.1L1192.5,411.2 M1210.4,440.0L1214.4,436.9L1216.5,434.7L1219.6,435.8L1221.2,434.1L1223.8,431.3L1225.2,432.7 M1216.0,445.7L1220.0,443.5 M1000.4,467.6L1001.7,462.5L1002.0,459.3L1002.4,457.8 M1000.8,458.3L1002.4,457.8L1004.3,455.4L1002.9,454.2 M1002.4,457.8L1004.8,460.4L1009.5,457.5L1010.4,460.6L1005.2,462.5L1007.6,465.1L1006.4,466.3L1003.1,468.4L1000.4,468.0 M1009.5,457.5L1014.7,454.9L1015.1,449.3L1017.9,447.6 M1010.4,460.6L1013.2,461.4L1017.2,463.5L1023.3,468.4L1027.6,468.7L1029.9,468.9L1030.4,466.3L1031.3,466.3 M1027.6,468.7L1029.9,470.1L1032.2,470.1 M1018.9,500.1L1019.8,497.7L1022.6,497.7L1027.3,498.2L1029.9,498.4L1033.7,494.8L1040.5,493.8L1047.5,491.4L1049.1,486.5L1048.0,484.7L1041.9,484.1L1039.6,481.0 M1048.0,484.7L1049.9,481.3L1050.8,479.1 M1040.5,493.8L1043.1,499.5 M1037.7,479.6L1038.6,480.0 M977.5,462.2L976.3,466.1L977.0,468.4L977.0,486.5L991.9,486.5L1005.0,486.5 M977.0,486.5L977.0,491.4L974.7,491.4L974.7,492.6L955.9,482.9L953.5,484.0L951.7,485.0L946.5,482.8L941.8,480.3L940.4,476.0L941.6,475.3L941.6,470.9L940.6,465.8L942.3,463.2L942.5,461.9L945.3,460.1L945.3,458.2 M940.6,465.8L939.5,460.9L936.2,457.8L937.8,454.1L938.0,449.3L938.5,448.0 M913.1,453.0L914.3,457.2L915.5,460.6L909.8,461.9L909.8,464.0L906.1,466.6L901.9,467.6L897.9,469.7L897.9,472.3L887.3,472.3 M897.9,472.3L897.9,476.5L890.1,476.5L890.1,482.9L887.8,484.0L887.5,488.1L878.4,488.1 M897.9,473.2L907.0,479.0L921.1,488.7L922.5,490.6L926.1,493.8L925.6,492.1L928.3,493.5L931.7,492.6L935.9,489.2L946.5,482.8 M907.0,479.0L902.8,479.0L905.1,502.3L896.4,502.3L893.2,502.5L891.3,502.0L889.6,504.1L886.8,500.8L884.7,499.6L879.8,500.6 M889.6,504.1L891.5,509.7L886.1,509.1L882.6,509.1L879.1,509.8 M878.8,506.8L881.9,506.4L885.9,507.1L882.1,508.0L878.8,508.0 M886.1,509.1L886.1,511.4L883.0,513.0 M891.5,509.7L896.4,509.5L898.8,512.1L899.6,514.9L898.3,521.1L896.2,521.6L894.1,519.0L892.0,515.4L888.9,515.7L887.0,517.7 M894.1,519.0L893.2,520.4L891.3,522.6 M898.3,521.1L898.8,523.5L900.7,525.4L900.6,528.7 M899.6,514.9L903.7,513.9L905.4,514.5L907.0,515.9L911.7,516.1L912.0,520.4L910.8,524.2L911.0,527.0 M905.4,514.5L906.1,511.1L908.0,509.0L909.1,507.3L911.5,505.9L913.6,505.4L916.7,503.4L918.8,503.6L920.5,503.7L920.7,507.3L923.5,509.7L923.9,510.9 M918.8,503.6L926.5,502.5L928.3,499.6L928.3,493.5 M911.7,516.1L911.7,513.0L917.9,512.8L920.4,513.0L923.9,510.9L926.8,511.4L924.6,517.8L924.6,524.1 M917.9,512.8L919.7,518.3L919.9,521.6L921.1,524.6 M920.4,513.0L922.1,517.8L922.1,524.3 M926.8,511.4L927.9,507.1L934.8,508.3L940.6,508.8L947.9,507.6L950.3,506.6L950.0,504.7L954.7,498.9L955.4,490.4L953.5,484.0 M950.3,506.6L951.7,509.7L952.6,511.9L949.3,516.4L947.0,519.2L944.9,523.5L941.3,523.0L938.5,527.7 M951.7,509.7L953.8,513.0L954.7,515.4L951.0,516.4L954.0,521.3L957.3,520.9L962.0,519.9L963.0,517.8L969.3,514.0L972.1,513.3L971.2,509.0L970.0,506.4L972.4,501.8L974.7,501.8L974.7,492.6 M954.0,521.3L952.4,524.9L952.6,527.2L955.7,531.9L956.1,533.8L956.4,535.0L957.1,531.5L962.0,530.8L962.0,528.7L966.7,528.7L970.9,529.4L973.3,528.2L977.8,527.2L982.7,527.0 M941.3,533.6L944.9,533.8L949.6,533.8L956.1,533.8 M941.3,536.6L944.9,536.6L944.9,533.8 M949.6,533.8L952.1,535.9L951.0,539.0L952.4,540.4L952.1,543.5L948.9,544.6L947.7,547.2L944.4,548.2 M962.0,530.8L960.8,533.8L960.1,538.3L956.4,544.2L955.7,548.2L952.1,550.5L949.1,549.8L947.0,552.6L949.8,552.9L957.3,552.9L958.2,555.9L963.9,557.6L963.9,555.5L969.5,556.2L969.8,561.6L970.7,565.4L974.7,565.0 M947.0,552.6L947.0,550.8L948.4,549.3L949.1,549.8 M972.1,513.3L974.0,518.5L975.2,518.5L977.8,522.5L982.7,527.0L987.6,528.7L990.7,530.8L993.5,530.5L997.0,530.2L998.2,529.1L1002.7,528.2 M975.2,518.5L977.0,514.7L983.9,516.4L987.9,515.2L991.6,515.9L994.4,511.4L996.3,510.2L996.1,513.8L998.0,516.6L998.4,519.0L995.9,520.6L999.8,523.2L1002.7,528.2 M998.4,519.0L998.9,514.0L1002.2,509.2L1003.8,504.9L1004.1,503.5L1005.2,498.7L1009.0,496.2 M1004.1,505.2L1007.4,503.7L1010.0,504.4L1014.2,505.6L1017.9,509.5L1019.6,509.0 M1017.9,509.5L1016.5,513.0L1019.1,513.3L1019.8,511.9 M1019.1,513.3L1020.5,516.8L1024.0,518.7L1028.8,520.2L1031.1,520.2L1024.0,527.2L1019.8,527.9L1017.0,529.1L1014.7,529.8L1011.4,531.0L1007.8,530.5L1005.0,528.7L1002.7,528.2 M1014.7,529.8L1014.7,541.1L1015.8,543.0 M998.2,529.1L999.4,530.8L1000.5,535.0L998.2,538.3L998.0,541.4L1006.7,546.1L1006.9,547.2L1010.4,550.1 M990.7,530.8L991.9,533.8L987.9,537.6L987.9,542.3L990.0,541.5L998.0,541.4 M987.9,542.3L986.9,545.1L987.2,549.5L987.9,553.6L990.4,558.3 M990.0,541.5L990.7,544.6L990.0,547.0L987.2,549.5 M990.7,544.6L986.5,545.5 M990.4,558.3L995.6,561.2L998.2,561.4L999.4,566.1L1002.4,566.1L1008.8,565.7L1013.2,563.5 M995.6,561.2L996.6,564.5L995.1,571.2L999.1,573.1L999.4,573.6L1002.4,576.9L1001.3,579.6L999.1,577.4L999.4,573.6 M999.4,566.1L1000.3,570.9L1002.4,573.6L1002.4,576.9 M990.4,558.3L986.2,559.0L985.3,563.8L985.7,567.3L988.3,567.8L988.3,570.7L984.6,568.3L981.5,567.1L977.8,565.7L974.7,565.0L974.7,569.7L970.0,569.7L970.0,577.4L973.3,580.8L977.8,581.3 M946.0,580.1L951.0,580.3L961.5,580.3L968.6,581.8L973.3,580.8 M967.7,582.5L967.7,591.5L965.3,591.5L965.3,598.5L965.3,607.6L959.2,608.3L957.1,608.1 M965.3,598.5L966.9,603.5L971.4,601.7L976.3,601.0L979.2,598.2L981.8,595.5L987.4,592.0L991.9,592.5 M977.8,581.3L977.8,583.2L981.8,587.8L983.4,587.8L987.4,592.0 M977.8,581.3L981.8,581.6L986.2,576.9L989.7,576.0L989.7,576.9L995.6,578.6L995.9,581.8L995.1,587.8L991.9,592.5L993.5,597.7L993.3,601.2L993.7,603.5L995.6,603.6 M989.7,576.0L989.3,574.5L996.3,572.1L995.1,571.2 M993.3,601.2L991.2,601.5L990.7,603.5L991.9,604.8L993.7,603.5 M981.8,610.6L984.6,608.3L987.2,609.3L986.9,611.4L984.3,613.2L982.7,612.4L981.8,610.6"/>
<path fill="#009a92" transform="translate(1232.3 600.6) scale(.984 .982) translate(-1232 -600)" d="M1253.2,564.2L1255.5,568.5L1256.2,573.1L1257.9,572.6L1259.8,575.7L1260.9,579.1L1261.9,583.0L1263.3,584.7L1266.6,586.6L1268.9,589.3L1270.3,592.5L1272.7,594.7L1273.9,596.2L1276.4,598.5L1278.3,599.0L1278.1,601.5L1278.3,605.0L1279.0,606.8L1279.3,608.1L1278.3,611.7L1277.6,615.3L1275.0,619.2L1273.9,621.8L1272.9,623.1L1272.7,625.0L1271.3,628.2L1270.8,631.5L1267.3,632.3L1266.1,632.5L1262.3,635.8L1259.8,633.9L1258.8,632.8L1255.5,635.1L1253.2,633.9L1251.1,633.8L1248.5,632.8L1246.6,630.1L1245.7,627.4L1244.7,626.2L1242.8,626.5L1243.8,624.5L1242.8,622.6L1242.1,625.0L1240.2,625.3L1241.4,622.1L1242.1,618.1L1241.7,619.4L1240.2,621.3L1237.7,623.9L1236.0,623.7L1234.8,620.2L1233.7,618.9L1232.5,617.1L1226.4,615.5L1221.5,616.1L1216.8,617.4L1214.4,617.6L1210.9,619.4L1209.5,621.0L1204.8,621.8L1200.3,622.0L1198.4,623.3L1195.4,624.9L1192.5,624.7L1188.9,623.0L1188.5,620.9L1190.0,620.2L1190.3,616.8L1189.3,612.9L1187.6,608.6L1186.6,605.8L1184.2,601.9L1186.0,602.0L1184.8,600.2L1185.4,598.7L1184.8,596.5L1185.5,593.0L1186.6,591.0L1186.9,592.8L1188.8,590.7L1192.5,588.2L1195.4,587.8L1197.0,587.4L1200.3,586.4L1203.8,583.9L1205.5,581.8L1207.1,577.9L1208.8,580.1L1208.8,577.4L1210.9,575.7L1212.5,573.6L1216.5,571.5L1218.6,573.3L1219.6,574.5L1221.5,574.3L1222.9,574.3L1222.4,572.4L1224.3,569.7L1225.8,568.4L1227.3,567.8L1229.4,567.8L1229.9,565.9L1228.0,565.5L1230.6,565.9L1232.0,566.9L1233.7,567.5L1236.7,567.6L1239.3,567.3L1240.0,567.8L1240.2,568.2L1239.3,570.2L1237.9,570.9L1237.7,572.6L1236.5,574.3L1238.4,576.0L1240.2,576.7L1242.6,578.4L1245.7,580.3L1246.4,581.0L1249.2,580.5L1250.6,576.9L1251.1,573.3L1251.1,569.7L1251.6,568.9L1251.8,567.3L1252.2,565.0Z M1258.3,640.3L1262.2,641.5L1264.0,641.1L1266.8,640.8L1266.8,643.9L1266.1,646.7L1264.5,647.6L1263.3,648.4L1261.4,648.2L1260.2,646.4L1259.5,644.5L1258.3,641.9Z M1224.5,565.9L1227.1,565.7L1226.9,566.9L1225.0,566.9Z M1238.8,571.6L1240.0,571.9L1239.5,572.8Z M1239.3,626.9L1242.6,626.9L1241.7,627.7L1239.8,627.5Z"/>
</svg>
<!-- zoom buttons -->
<div class="abs" style="left:375px;top:634px;width:109px;height:45px;border:1px solid #e5e7f0;border-radius:7px"></div>
<div class="abs" style="left:431px;top:634px;width:1px;height:45px;background:#e5e7f0"></div>
<!-- tabs -->
<div class="abs" style="left:1560px;top:297px;width:11px;height:11px;border-radius:50%;background:#08bdb4"></div>
<div class="abs" style="left:1755px;top:297px;width:11px;height:11px;border-radius:50%;background:#f0857a"></div>
<div class="abs" style="left:1508px;top:333px;width:192px;height:2px;background:#0f9d94"></div>
<!-- list -->
<div class="row" style="top:394px"></div>
<div class="row" style="top:448px"></div>
<div class="row" style="top:501px"></div>
<div class="row" style="top:554px"></div>
<div class="row" style="top:608px"></div>

<!-- ================= CARD 2 ================= -->
<div class="card" style="top:762px;height:560px"></div>
<svg class="abs" style="left:0;top:0;overflow:visible" width="1" height="1" fill="#8f98b6"><circle cx="333.6" cy="772.6" r="1.25"/><circle cx="338.9" cy="772.6" r="1.25"/><circle cx="344.5" cy="772.6" r="1.25"/><circle cx="333.6" cy="777.9" r="1.25"/><circle cx="338.9" cy="777.9" r="1.25"/><circle cx="333.6" cy="783.1" r="1.25"/></svg>
<svg class="abs" style="left:516.8px;top:799.3px" width="22" height="20.4" viewBox="-12 -12 24 24" preserveAspectRatio="none" fill="none" stroke="#2f6bff" stroke-width="2.3" stroke-linecap="round" stroke-linejoin="round">
<path d="M-8.6,-1.6A8,8 0 0 1 7,-4.6L9.4,-2.2"/><path d="M9.6,-9.2V-2H2.6"/>
<path d="M8.6,1.8A8,8 0 0 1 -7,4.8L-9.4,2.4"/><path d="M-9.6,9.4V2.2H-2.6"/>
</svg>
<div class="pill" style="left:355px;top:837px;width:161px"><svg class="abs" style="left:126px;top:15px" width="18" height="12" viewBox="0 0 18 12" fill="none" stroke="#7c88a2" stroke-width="1.7" stroke-linecap="round" stroke-linejoin="round"><path d="M2,2.2L8.8,9L15.6,2.2"/></svg></div>
<div class="pill" style="left:527px;top:837px;width:145px"><svg class="abs" style="left:15px;top:10.5px" width="23" height="23" viewBox="0 0 23 23" fill="none" stroke="#7c88a2" stroke-width="1.5" stroke-linecap="round"><circle cx="11.4" cy="11.2" r="9.4"/><path d="M7.2,11.2H15.6M11.4,7V15.4"/></svg></div>
<div class="rng" style="top:837px">
  <div class="sel"></div>
  <i style="left:102px"></i><i style="left:157px"></i><i style="left:213px"></i><i style="left:284px"></i><i style="left:345px"></i>
</div>
<!-- toggle -->
<div class="abs" style="left:355px;top:901px;width:43px;height:26px;border-radius:13px;background:#3d6ff7"></div>
<div class="abs" style="left:373.7px;top:903px;width:22px;height:22px;border-radius:50%;background:#fff"></div>
<svg class="abs" style="left:695px;top:902px" width="24" height="24" viewBox="0 0 24 24" fill="none" stroke="#6b7691" stroke-width="1.7" stroke-linecap="round" stroke-linejoin="round"><circle cx="11.8" cy="11.7" r="9.8"/><path d="M10.4,10.6H12.2V16M10.2,16.1H14.2" stroke-width="1.5"/><circle cx="12" cy="7.4" r="1.1" fill="#6b7691" stroke="none"/></svg>
<!-- chart -->
<div class="grid" style="top:1018px"></div>
<div class="grid" style="top:1111px"></div>
<div class="grid" style="top:1203px;height:1.4px"></div>
<div class="abs" style="left:1460px;top:926px;width:40px;height:7px;overflow:hidden"><div class="t ax" style="left:7.5px;top:-6px;letter-spacing:.4px">80K</div></div>
<svg class="abs" style="left:0;top:900px" width="1946" height="376" viewBox="0 900 1946 376" fill="none">
<path d="M1193.5,1297C1207.5,1297 1217,1057 1229.5,1057C1242,1057 1251.5,1297 1265.5,1297Z" fill="#efc322" fill-opacity=".025"/>
<path d="M1193.5,1297C1207.5,1297 1217,1057 1229.5,1057C1242,1057 1251.5,1297 1265.5,1297" stroke="#efc322" stroke-width="2.8"/>
<circle cx="1229.5" cy="1057.3" r="5" fill="#fff"/><circle cx="1229.5" cy="1057.3" r="2.9" fill="#efc322"/>
<path d="M606.5,1297C620.5,1297 630,1257.6 642.1,1257.6C654.2,1257.6 663.7,1297 677.7,1297Z" fill="#efc322" fill-opacity=".025"/>
<path d="M606.5,1297C620.5,1297 630,1257.6 642.1,1257.6C654.2,1257.6 663.7,1297 677.7,1297" stroke="#efc322" stroke-width="2.8"/>
<circle cx="642.1" cy="1257.8" r="5" fill="#fff"/><circle cx="642.1" cy="1257.8" r="2.9" fill="#efc322"/>
</svg>

<!-- right tabs -->
<div class="abs" style="left:1508px;top:963px;width:192px;height:2px;background:#3b6cf6"></div>
<!-- stats -->
<div class="abs" style="left:1508px;top:1013px;width:10px;height:10px;border-radius:50%;background:#08bdb4"></div>
<div class="bar" style="top:1071px"></div>
<div class="abs" style="left:1508px;top:1125px;width:10px;height:10px;border-radius:50%;background:#efc322"></div>
<div class="bar" style="top:1183px;background:#efc322"></div>
<div class="abs" style="left:1508px;top:1237px;width:10px;height:10px;border-radius:50%;background:#e04a3a"></div>
<div class="t" id="title" style="left:323.01px;top:73.7px;font-size:31.3px;color:#23252e;letter-spacing:-1.194px;font-weight:bold">Dashboard</div>
<div class="t" id="c1t" style="left:355.87px;top:168.1px;font-size:25.0px;color:#23252e;letter-spacing:-0.494px;font-weight:bold">Top Locations</div>
<div class="t" id="c2t" style="left:355.85px;top:797.2px;font-size:25.0px;color:#23252e;letter-spacing:-0.35px;font-weight:bold">Transactions</div>
<div class="t" id="a1" style="left:371.92px;top:218.4px;font-size:19.3px;color:#7c88a2;letter-spacing:0.67px">Action type</div>
<div class="t" id="f1" style="left:570.23px;top:218.4px;font-size:19.3px;color:#7c88a2;letter-spacing:0.37px">Add Filter</div>
<div class="t" id="a2" style="left:371.92px;top:847.4px;font-size:19.3px;color:#7c88a2;letter-spacing:0.67px">Action type</div>
<div class="t" id="f2" style="left:570.23px;top:847.4px;font-size:19.3px;color:#7c88a2;letter-spacing:0.37px">Add Filter</div>
<div class="t" id="r1a" style="left:1492.4px;top:218.3px;font-size:19.3px;color:#6f7b95;letter-spacing:0.595px">Custom</div>
<div class="t" id="r1b" style="left:1593.72px;top:218.3px;font-size:19.3px;color:#6f7b95;letter-spacing:-1.65px">1D</div>
<div class="t" id="r1c" style="left:1649.18px;top:218.3px;font-size:19.3px;color:#6f7b95;letter-spacing:-0.15px">7D</div>
<div class="t" id="r1d" style="left:1706.62px;top:218.3px;font-size:19.3px;color:#3b6cf6;letter-spacing:0.985px">30D</div>
<div class="t" id="r1e" style="left:1776.95px;top:218.3px;font-size:19.3px;color:#6f7b95;letter-spacing:1.848px">3M</div>
<div class="t" id="r1f" style="left:1836.76px;top:218.3px;font-size:19.3px;color:#6f7b95;letter-spacing:0.831px">12M</div>
<div class="t" id="r2a" style="left:1492.4px;top:847.3px;font-size:19.3px;color:#6f7b95;letter-spacing:0.595px">Custom</div>
<div class="t" id="r2b" style="left:1593.72px;top:847.3px;font-size:19.3px;color:#6f7b95;letter-spacing:-1.65px">1D</div>
<div class="t" id="r2c" style="left:1649.18px;top:847.3px;font-size:19.3px;color:#6f7b95;letter-spacing:-0.15px">7D</div>
<div class="t" id="r2d" style="left:1706.62px;top:847.3px;font-size:19.3px;color:#3b6cf6;letter-spacing:0.985px">30D</div>
<div class="t" id="r2e" style="left:1776.95px;top:847.3px;font-size:19.3px;color:#6f7b95;letter-spacing:1.848px">3M</div>
<div class="t" id="r2f" style="left:1836.76px;top:847.3px;font-size:19.3px;color:#6f7b95;letter-spacing:0.831px">12M</div>
<div class="t" id="tabA" style="left:1576.5px;top:295.6px;font-size:14.6px;color:#4a5264;letter-spacing:-0.017px">APPROVE</div>
<div class="t" id="tabD" style="left:1770.66px;top:295.6px;font-size:14.6px;color:#8a90a0;letter-spacing:0.468px">DECLINE</div>
<div class="t" id="l1" style="left:1520.47px;top:353.9px;font-size:19.3px;color:#4a5264;letter-spacing:-0.02px">1. Australia</div>
<div class="t" id="l2" style="left:1521.0px;top:407.7px;font-size:19.3px;color:#4a5264;letter-spacing:0.276px">2. Japan</div>
<div class="t" id="l3" style="left:1521.0px;top:461.0px;font-size:19.3px;color:#4a5264;letter-spacing:-0.203px">3. Russia</div>
<div class="t" id="l4" style="left:1521.61px;top:513.9px;font-size:19.3px;color:#4a5264;letter-spacing:0.089px">4. Poland</div>
<div class="t" id="l5" style="left:1521.0px;top:567.6px;font-size:19.3px;color:#4a5264;letter-spacing:0.01px">5. Belarus</div>
<div class="t" id="n1" style="left:1859.58px;top:353.9px;font-size:19.3px;color:#4a5264;letter-spacing:0.3px">7</div>
<div class="t" id="n2" style="left:1859.96px;top:407.7px;font-size:19.3px;color:#4a5264;letter-spacing:0.3px">3</div>
<div class="t" id="n3" style="left:1859.33px;top:461.0px;font-size:19.3px;color:#4a5264;letter-spacing:0.3px">1</div>
<div class="t" id="n4" style="left:1859.33px;top:513.9px;font-size:19.3px;color:#4a5264;letter-spacing:0.3px">1</div>
<div class="t" id="n5" style="left:1859.33px;top:567.6px;font-size:19.3px;color:#4a5264;letter-spacing:0.3px">1</div>
<div class="t" id="plus" style="left:397.6px;top:647.0px;font-size:19px;color:#6f7b95;letter-spacing:0px">+</div>
<div class="t" id="minus" style="left:453.8px;top:645.5px;font-size:19px;color:#6f7b95;letter-spacing:0px">-</div>
<div class="t" id="show" style="left:408.07px;top:903.5px;font-size:19.3px;color:#4a5264;letter-spacing:0.402px">Show current transaction states</div>
<div class="t" id="amt" style="left:1569.52px;top:922.8px;font-size:16.3px;color:#23252e;letter-spacing:-0.266px">AMOUNT</div>
<div class="t" id="cnt" style="left:1767.43px;top:923.9px;font-size:16.3px;color:#7a8194;letter-spacing:-0.21px">COUNT</div>
<div class="t" id="sA" style="left:1524.05px;top:1010.1px;font-size:14.6px;color:#4a5264;letter-spacing:0.014px">APPROVE</div>
<div class="t" id="sR" style="left:1523.02px;top:1121.9px;font-size:14.6px;color:#4a5264;letter-spacing:0.084px">REVIEW</div>
<div class="t" id="sD" style="left:1523.02px;top:1233.7px;font-size:14.6px;color:#4a5264;letter-spacing:0.481px">DECLINE</div>
<div class="t" id="vA" style="left:1507.0px;top:1036.8px;font-size:19.3px;color:#4a5264;letter-spacing:0.364px">98,94 USD</div>
<div class="t" id="vR" style="left:1507.0px;top:1148.7px;font-size:19.3px;color:#4a5264;letter-spacing:0.44px">60 490,53 USD</div>
<div class="t" id="vD" style="left:1507.0px;top:1260.5px;font-size:19.3px;color:#4a5264;letter-spacing:-0.418px">2,16 USD</div>
<div class="t" id="pA" style="left:1818.78px;top:1016.3px;font-size:34.0px;color:#4b5162;letter-spacing:-1.824px">0.2%</div>
<div class="t" id="pR" style="left:1797.96px;top:1127.8px;font-size:34.0px;color:#4b5162;letter-spacing:-0.911px">99.8%</div>
<div class="t" id="pD" style="left:1818.32px;top:1240.2px;font-size:34.0px;color:#4b5162;letter-spacing:-1.678px">0.0%</div>
<div class="t" id="y60" style="left:1467.09px;top:1011.5px;font-size:13.6px;color:#7c88a2;letter-spacing:0.629px">60K</div>
<div class="t" id="y40" style="left:1467.5px;top:1104.5px;font-size:13.6px;color:#7c88a2;letter-spacing:0.392px">40K</div>
<div class="t" id="y20" style="left:1466.93px;top:1197.5px;font-size:13.6px;color:#7c88a2;letter-spacing:0.71px">20K</div>
<div class="abs" style="left:628px;top:1292px;width:1500px;height:120px;border-radius:40px;box-shadow:0 0 90px rgba(0,0,0,.215);background:rgba(0,0,0,.2)"></div>

</div>
</body>
</html>
